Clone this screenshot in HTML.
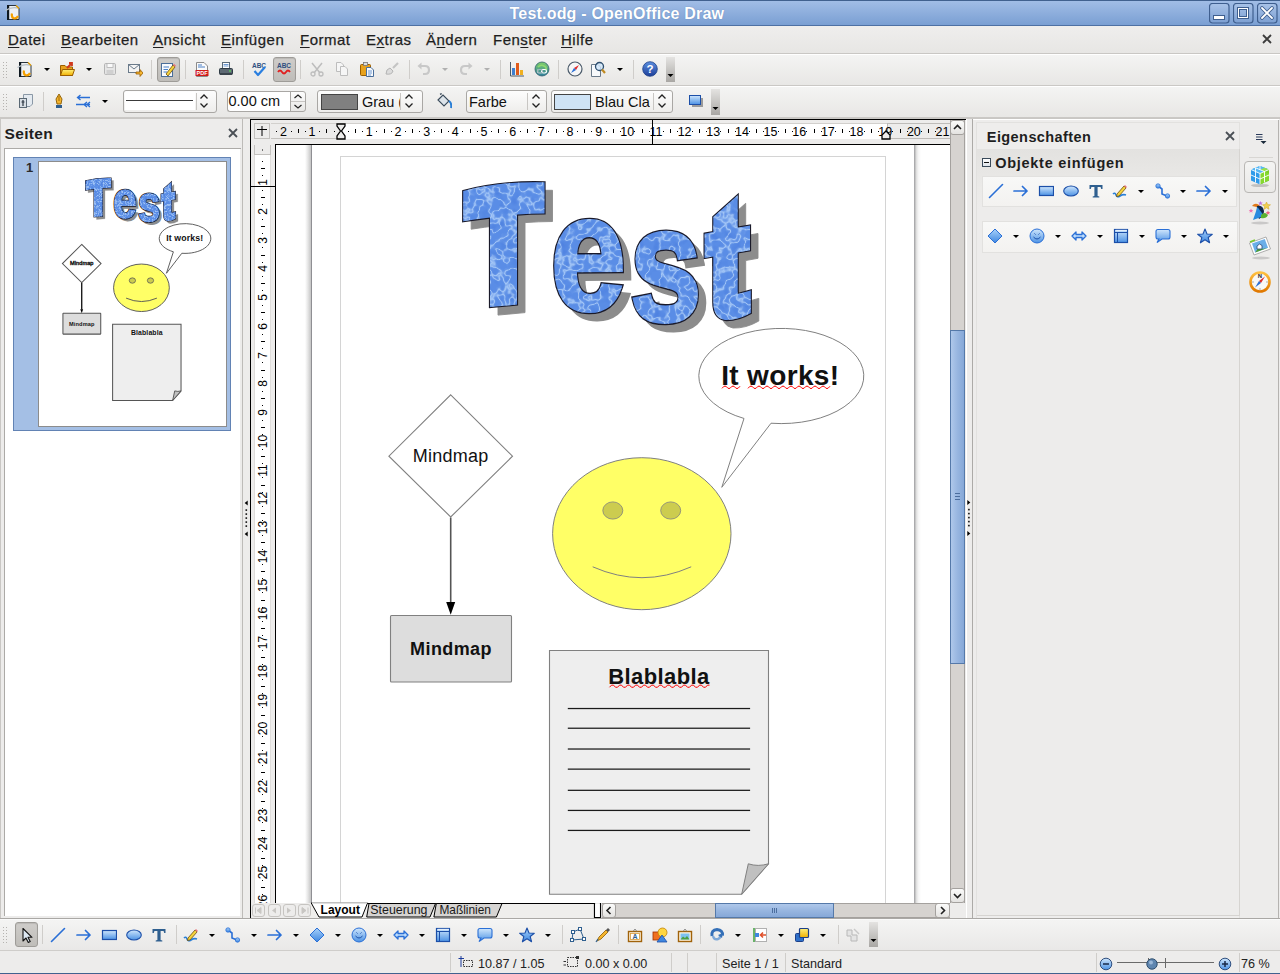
<!DOCTYPE html><html><head><meta charset="utf-8"><style>
html,body{margin:0;padding:0;}
body{width:1280px;height:974px;overflow:hidden;position:relative;background:#EDECEB;font-family:"Liberation Sans", sans-serif;}
div,svg{box-sizing:border-box;}
u{text-decoration:underline;text-underline-offset:1.5px;text-decoration-thickness:1px;}
</style></head><body>
<svg width="0" height="0" style="position:absolute"><defs><linearGradient id="gBlue" x1="0" y1="0" x2="0" y2="1"><stop offset="0" stop-color="#A9D2FA"/><stop offset="1" stop-color="#3D86E0"/></linearGradient><linearGradient id="gBlue2" x1="0" y1="0" x2="0" y2="1"><stop offset="0" stop-color="#CFE6FC"/><stop offset="1" stop-color="#4C92E4"/></linearGradient><linearGradient id="gGray" x1="0" y1="0" x2="0" y2="1"><stop offset="0" stop-color="#F2F2F2"/><stop offset="1" stop-color="#BDBDBD"/></linearGradient><linearGradient id="gOver" x1="0" y1="0" x2="0" y2="1"><stop offset="0" stop-color="#D9D8D6"/><stop offset="1" stop-color="#A6A4A1"/></linearGradient><linearGradient id="gOrange" x1="0" y1="0" x2="0" y2="1"><stop offset="0" stop-color="#FFD36A"/><stop offset="1" stop-color="#E08A00"/></linearGradient><linearGradient id="gYellow" x1="0" y1="0" x2="0" y2="1"><stop offset="0" stop-color="#FFF07A"/><stop offset="1" stop-color="#F0B000"/></linearGradient><linearGradient id="gPress" x1="0" y1="0" x2="0" y2="1"><stop offset="0" stop-color="#D4D2CF"/><stop offset="1" stop-color="#BDBBB7"/></linearGradient><linearGradient id="gGlobe" x1="0" y1="0" x2="0" y2="1"><stop offset="0" stop-color="#7FCF6A"/><stop offset="1" stop-color="#2E7F9E"/></linearGradient><linearGradient id="gHelp" x1="0" y1="0" x2="0" y2="1"><stop offset="0" stop-color="#5C8FE0"/><stop offset="1" stop-color="#1D3F99"/></linearGradient></defs></svg>
<div style="position:absolute;left:0px;top:0px;width:1280px;height:26px;background:linear-gradient(#A1BDE6,#7A9FD3);border-top:1px solid #41618F;border-bottom:1px solid #4E70A3;"></div>
<div style="position:absolute;left:509.5px;top:4.52px;font-size:16px;line-height:18.40px;height:18.40px;white-space:nowrap;color:#FFFFFF;font-weight:bold;letter-spacing:0.2px;text-shadow:0 0 1px #5C7FB0;">Test.odg - OpenOffice Draw</div>
<svg style="position:absolute;left:1209px;top:3px;" width="21" height="21" viewBox="0 0 21 21"><rect x="0.5" y="0.5" width="19.5" height="19.5" rx="3" fill="url(#wbg)" stroke="#3F5F8F" stroke-width="1.2"/><rect x="4.5" y="12.5" width="11" height="4" fill="#fff" stroke="#3F5F8F" stroke-width="1"/></svg>
<svg style="position:absolute;left:1233px;top:3px;" width="21" height="21" viewBox="0 0 21 21"><rect x="0.5" y="0.5" width="19.5" height="19.5" rx="3" fill="url(#wbg)" stroke="#3F5F8F" stroke-width="1.2"/><rect x="5.5" y="5.5" width="9" height="9" fill="none" stroke="#3F5F8F" stroke-width="3"/><rect x="5.5" y="5.5" width="9" height="9" fill="none" stroke="#fff" stroke-width="1"/></svg>
<svg style="position:absolute;left:1257px;top:3px;" width="21" height="21" viewBox="0 0 21 21"><rect x="0.5" y="0.5" width="19.5" height="19.5" rx="3" fill="url(#wbg)" stroke="#3F5F8F" stroke-width="1.2"/><path d="M5 5 L15 15 M15 5 L5 15" stroke="#3F5F8F" stroke-width="3.6" stroke-linecap="round"/><path d="M5 5 L15 15 M15 5 L5 15" stroke="#fff" stroke-width="1.8" stroke-linecap="round"/></svg>
<svg width="0" height="0" style="position:absolute"><defs><linearGradient id="wbg" x1="0" y1="0" x2="0" y2="1"><stop offset="0" stop-color="#A9C3E8"/><stop offset="1" stop-color="#7C9FD2"/></linearGradient></defs></svg>
<svg style="position:absolute;left:5px;top:4px" width="16" height="16" viewBox="0 0 16 16"><path d="M3 1.5 H11 L14 4.5 V15.5 H3 Z" fill="#EEF1F4" stroke="#2A3440" stroke-width="1"/><rect x="2" y="1" width="2.2" height="15" fill="#0E1820"/><path d="M0.5 6.5 Q6 2.5 13 4" fill="none" stroke="#B8C0C8" stroke-width="1.3"/><path d="M11 1.5 L14 4.5" stroke="#E8A000" stroke-width="1.2"/><path d="M13 12 Q11.5 15.2 8.5 14.2 Q6.2 13 7 9.5" fill="none" stroke="#F5A000" stroke-width="2.2"/></svg>
<div style="position:absolute;left:0px;top:26px;width:1280px;height:28px;background:linear-gradient(#EFEEED,#E7E6E4);border-bottom:1px solid #C9C7C4;"></div>
<div style="position:absolute;left:8px;top:31.42px;font-size:15px;line-height:17.25px;height:17.25px;white-space:nowrap;color:#1E1E1E;font-weight:normal;letter-spacing:0.5px;-webkit-text-stroke:0.25px #1E1E1E;"><u>D</u>atei</div>
<div style="position:absolute;left:61px;top:31.42px;font-size:15px;line-height:17.25px;height:17.25px;white-space:nowrap;color:#1E1E1E;font-weight:normal;letter-spacing:0.5px;-webkit-text-stroke:0.25px #1E1E1E;"><u>B</u>earbeiten</div>
<div style="position:absolute;left:153px;top:31.42px;font-size:15px;line-height:17.25px;height:17.25px;white-space:nowrap;color:#1E1E1E;font-weight:normal;letter-spacing:0.5px;-webkit-text-stroke:0.25px #1E1E1E;"><u>A</u>nsicht</div>
<div style="position:absolute;left:221px;top:31.42px;font-size:15px;line-height:17.25px;height:17.25px;white-space:nowrap;color:#1E1E1E;font-weight:normal;letter-spacing:0.5px;-webkit-text-stroke:0.25px #1E1E1E;"><u>E</u>infügen</div>
<div style="position:absolute;left:300px;top:31.42px;font-size:15px;line-height:17.25px;height:17.25px;white-space:nowrap;color:#1E1E1E;font-weight:normal;letter-spacing:0.5px;-webkit-text-stroke:0.25px #1E1E1E;"><u>F</u>ormat</div>
<div style="position:absolute;left:366px;top:31.42px;font-size:15px;line-height:17.25px;height:17.25px;white-space:nowrap;color:#1E1E1E;font-weight:normal;letter-spacing:0.5px;-webkit-text-stroke:0.25px #1E1E1E;">E<u>x</u>tras</div>
<div style="position:absolute;left:426px;top:31.42px;font-size:15px;line-height:17.25px;height:17.25px;white-space:nowrap;color:#1E1E1E;font-weight:normal;letter-spacing:0.5px;-webkit-text-stroke:0.25px #1E1E1E;">Ä<u>n</u>dern</div>
<div style="position:absolute;left:493px;top:31.42px;font-size:15px;line-height:17.25px;height:17.25px;white-space:nowrap;color:#1E1E1E;font-weight:normal;letter-spacing:0.5px;-webkit-text-stroke:0.25px #1E1E1E;">Fen<u>s</u>ter</div>
<div style="position:absolute;left:561px;top:31.42px;font-size:15px;line-height:17.25px;height:17.25px;white-space:nowrap;color:#1E1E1E;font-weight:normal;letter-spacing:0.5px;-webkit-text-stroke:0.25px #1E1E1E;"><u>H</u>ilfe</div>
<svg style="position:absolute;left:1261px;top:33px;" width="12" height="12" viewBox="0 0 12 12"><path d="M2 2 L10 10 M10 2 L2 10" stroke="#3C3C3C" stroke-width="1.8"/></svg>
<div style="position:absolute;left:0px;top:54px;width:1280px;height:32px;background:linear-gradient(#F4F4F3,#E8E7E5);border-bottom:1px solid #CAC8C5;border-top:1px solid #FFFFFF;"></div>
<div style="position:absolute;left:0px;top:86px;width:1280px;height:32px;background:linear-gradient(#F4F4F3,#E8E7E5);border-bottom:1px solid #CAC8C5;border-top:1px solid #FFFFFF;"></div>
<svg style="position:absolute;left:3px;top:62px;" width="4" height="17" viewBox="0 0 4 17"><rect x="0" y="0" width="1" height="1" fill="#B5B3B0"/><rect x="0" y="3" width="1" height="1" fill="#B5B3B0"/><rect x="0" y="6" width="1" height="1" fill="#B5B3B0"/><rect x="0" y="9" width="1" height="1" fill="#B5B3B0"/><rect x="0" y="12" width="1" height="1" fill="#B5B3B0"/><rect x="0" y="15" width="1" height="1" fill="#B5B3B0"/><rect x="3" y="0" width="1" height="1" fill="#B5B3B0"/><rect x="3" y="3" width="1" height="1" fill="#B5B3B0"/><rect x="3" y="6" width="1" height="1" fill="#B5B3B0"/><rect x="3" y="9" width="1" height="1" fill="#B5B3B0"/><rect x="3" y="12" width="1" height="1" fill="#B5B3B0"/><rect x="3" y="15" width="1" height="1" fill="#B5B3B0"/></svg>
<svg style="position:absolute;left:17px;top:61px" width="16" height="16" viewBox="0 0 16 16"><path d="M3 1.5 H11 L14 4.5 V15.5 H3 Z" fill="#EEF1F4" stroke="#2A3440" stroke-width="1"/><rect x="2" y="1" width="2.2" height="15" fill="#0E1820"/><path d="M0.5 6.5 Q6 2.5 13 4" fill="none" stroke="#B8C0C8" stroke-width="1.3"/><path d="M11 1.5 L14 4.5" stroke="#E8A000" stroke-width="1.2"/><path d="M13 12 Q11.5 15.2 8.5 14.2 Q6.2 13 7 9.5" fill="none" stroke="#F5A000" stroke-width="2.2"/></svg>
<svg style="position:absolute;left:38.5px;top:61px" width="16" height="16" viewBox="0 0 16 16"><path d="M5 7 H11 L8 10 Z" fill="#000"/></svg>
<svg style="position:absolute;left:59px;top:61px" width="16" height="16" viewBox="0 0 16 16"><path d="M1.5 4.5 H6 L7.5 6 H13.5 V14.5 H1.5 Z" fill="#E8A21C" stroke="#9B5E00" stroke-width="1"/><path d="M1.5 14.5 L3.5 8.5 H15.5 L13.5 14.5 Z" fill="url(#gYellow)" stroke="#9B5E00" stroke-width="1"/><path d="M8 7 L13 2 M10 2 H13 V5" fill="none" stroke="#D0381C" stroke-width="1.8"/></svg>
<svg style="position:absolute;left:80.5px;top:61px" width="16" height="16" viewBox="0 0 16 16"><path d="M5 7 H11 L8 10 Z" fill="#000"/></svg>
<svg style="position:absolute;left:102px;top:61px" width="16" height="16" viewBox="0 0 16 16"><rect x="2.5" y="2.5" width="11" height="11" rx="1.2" fill="#E6E6E6" stroke="#B4B4B4" stroke-width="1"/><rect x="5" y="2.5" width="6" height="4" fill="#FAFAFA" stroke="#B4B4B4" stroke-width="0.8"/><rect x="4.5" y="9" width="7" height="4.5" fill="#D0D0D0"/></svg>
<svg style="position:absolute;left:127px;top:61px" width="16" height="16" viewBox="0 0 16 16"><rect x="1.5" y="3.5" width="11" height="8" fill="#F4F4F4" stroke="#6A7A8A" stroke-width="1"/><path d="M1.5 3.5 L7 8 L12.5 3.5" fill="none" stroke="#6A7A8A" stroke-width="1"/><path d="M9 11 H13 V8.5 L16 12 L13 15.5 V13 H9 Z" fill="#F5B52E" stroke="#9B5E00" stroke-width="0.8"/></svg>
<div style="position:absolute;left:151px;top:60px;width:1px;height:19px;background:#CFCDCA;"></div>
<div style="position:absolute;left:157px;top:57px;width:23px;height:25px;background:linear-gradient(#CFCDCA,#BFBDB9);border:1px solid #9E9C98;border-radius:3px;box-shadow:inset 0 1px 1px rgba(0,0,0,0.1);"></div>
<svg style="position:absolute;left:160px;top:61px" width="16" height="16" viewBox="0 0 16 16"><rect x="1.5" y="2.5" width="11" height="13" fill="#F8FAFC" stroke="#4A6E9A" stroke-width="1"/><path d="M3.5 6 H9 M3.5 8.5 H8 M3.5 11 H7" stroke="#4A80C8" stroke-width="1"/><path d="M6 13 L13 4 L15 6 L8 15 Z" fill="#F5D33A" stroke="#6B4E12" stroke-width="0.8"/><path d="M13 4 L14 2.8 L16 4.8 L15 6 Z" fill="#E8777A"/></svg>
<div style="position:absolute;left:185px;top:60px;width:1px;height:19px;background:#CFCDCA;"></div>
<svg style="position:absolute;left:194px;top:61px" width="16" height="16" viewBox="0 0 16 16"><path d="M2.5 1.5 H10 L13.5 5 V15.5 H2.5 Z" fill="#FAFAFA" stroke="#8A8A8A" stroke-width="1"/><path d="M4 4 H8 M4 6 H11" stroke="#4A80C8" stroke-width="1"/><rect x="1.5" y="9" width="13" height="6" fill="#D01818"/><text x="8" y="14" text-anchor="middle" font-family="Liberation Sans" font-weight="bold" font-size="5.5" fill="#fff">PDF</text></svg>
<svg style="position:absolute;left:218px;top:61px" width="16" height="16" viewBox="0 0 16 16"><rect x="4.5" y="1.5" width="7" height="6" fill="#FFFFFF" stroke="#5A6A7A" stroke-width="1"/><path d="M5.5 3.5 H10.5 M5.5 5 H10.5" stroke="#4A80C8" stroke-width="0.8"/><rect x="1.5" y="7.5" width="13" height="6" rx="1" fill="#5E6A74" stroke="#2E3A44" stroke-width="1"/><rect x="2" y="12" width="12" height="2" fill="#3A444C"/><circle cx="12" cy="10" r="0.9" fill="#5CD05C"/></svg>
<div style="position:absolute;left:243px;top:60px;width:1px;height:19px;background:#CFCDCA;"></div>
<svg style="position:absolute;left:251px;top:61px" width="16" height="16" viewBox="0 0 16 16"><text x="8" y="7" text-anchor="middle" font-family="Liberation Sans" font-weight="bold" font-size="6.5" fill="#2F4F7F">ABC</text><path d="M3.5 10 L7 14 L14 6" fill="none" stroke="#2A7FE0" stroke-width="2.2" stroke-linejoin="round"/></svg>
<div style="position:absolute;left:273px;top:57px;width:23px;height:25px;background:linear-gradient(#CFCDCA,#BFBDB9);border:1px solid #9E9C98;border-radius:3px;box-shadow:inset 0 1px 1px rgba(0,0,0,0.1);"></div>
<svg style="position:absolute;left:276px;top:61px" width="16" height="16" viewBox="0 0 16 16"><text x="8" y="7" text-anchor="middle" font-family="Liberation Sans" font-weight="bold" font-size="6.5" fill="#2F4F7F">ABC</text><path d="M2 11 Q4 8 6 11 T10 11 T14 11" fill="none" stroke="#E02020" stroke-width="1.8"/></svg>
<div style="position:absolute;left:300px;top:60px;width:1px;height:19px;background:#CFCDCA;"></div>
<svg style="position:absolute;left:309px;top:61px" width="16" height="16" viewBox="0 0 16 16"><path d="M3 2 L11 12 M13 2 L5 12" stroke="#BDBDBD" stroke-width="1.5"/><circle cx="4" cy="13" r="2" fill="none" stroke="#BDBDBD" stroke-width="1.3"/><circle cx="12" cy="13" r="2" fill="none" stroke="#BDBDBD" stroke-width="1.3"/></svg>
<svg style="position:absolute;left:334px;top:61px" width="16" height="16" viewBox="0 0 16 16"><path d="M2.5 1.5 H7 L9.5 4 V10.5 H2.5 Z" fill="#F6F6F6" stroke="#BDBDBD" stroke-width="1"/><path d="M6.5 5.5 H11 L13.5 8 V14.5 H6.5 Z" fill="#F6F6F6" stroke="#BDBDBD" stroke-width="1"/></svg>
<svg style="position:absolute;left:359px;top:61px" width="16" height="16" viewBox="0 0 16 16"><rect x="1.5" y="3.5" width="10" height="11" rx="1" fill="#E8A21C" stroke="#9B5E00" stroke-width="1"/><rect x="4.5" y="1.5" width="4" height="3" fill="#DDD" stroke="#777" stroke-width="0.8"/><path d="M7.5 6.5 H12 L14.5 9 V15.5 H7.5 Z" fill="#F8FAFC" stroke="#4A6E9A" stroke-width="1"/><path d="M9 10 H13 M9 12 H13 M9 14 H12" stroke="#4A80C8" stroke-width="0.8"/></svg>
<svg style="position:absolute;left:384px;top:61px" width="16" height="16" viewBox="0 0 16 16"><path d="M9 7 L14 2" stroke="#C4C4C4" stroke-width="2.2"/><path d="M2 13 Q2 8 6 7 L9 10 Q8 14 2 13 Z" fill="#DCDCDC" stroke="#B4B4B4" stroke-width="1"/></svg>
<div style="position:absolute;left:409px;top:60px;width:1px;height:19px;background:#CFCDCA;"></div>
<svg style="position:absolute;left:416px;top:61px" width="16" height="16" viewBox="0 0 16 16"><path d="M4 5 H9 Q13 5 13 9 Q13 13 9 13 H7" fill="none" stroke="#C8C8C8" stroke-width="2.2"/><path d="M1.5 5 L5.5 1.5 V8.5 Z" fill="#C8C8C8"/></svg>
<svg style="position:absolute;left:437px;top:61px" width="16" height="16" viewBox="0 0 16 16"><path d="M5 7 H11 L8 10 Z" fill="#B0B0B0"/></svg>
<svg style="position:absolute;left:458px;top:61px" width="16" height="16" viewBox="0 0 16 16"><path d="M12 5 H7 Q3 5 3 9 Q3 13 7 13 H9" fill="none" stroke="#C8C8C8" stroke-width="2.2"/><path d="M14.5 5 L10.5 1.5 V8.5 Z" fill="#C8C8C8"/></svg>
<svg style="position:absolute;left:479px;top:61px" width="16" height="16" viewBox="0 0 16 16"><path d="M5 7 H11 L8 10 Z" fill="#B0B0B0"/></svg>
<div style="position:absolute;left:500px;top:60px;width:1px;height:19px;background:#CFCDCA;"></div>
<svg style="position:absolute;left:509px;top:61px" width="16" height="16" viewBox="0 0 16 16"><path d="M1.5 1 V15 H15" fill="none" stroke="#4A5A6A" stroke-width="1"/><rect x="3" y="7" width="3" height="7" fill="#3E7FD0"/><rect x="7" y="2" width="3" height="12" fill="#E05A1A"/><rect x="11" y="9" width="3" height="5" fill="#F0B020"/></svg>
<svg style="position:absolute;left:534px;top:61px" width="16" height="16" viewBox="0 0 16 16"><circle cx="8" cy="8" r="7" fill="url(#gGlobe)" stroke="#2F5F6F" stroke-width="0.8"/><path d="M4 6 Q7 3 10 5 Q13 6 12 9" fill="none" stroke="#8FD870" stroke-width="1.6"/><rect x="3.5" y="8.5" width="5" height="3.5" rx="1.7" fill="none" stroke="#fff" stroke-width="1.2"/><rect x="7.5" y="8.5" width="5" height="3.5" rx="1.7" fill="none" stroke="#fff" stroke-width="1.2"/><rect x="3.5" y="8.5" width="5" height="3.5" rx="1.7" fill="none" stroke="#2F5F6F" stroke-width="0.5"/></svg>
<div style="position:absolute;left:558px;top:60px;width:1px;height:19px;background:#CFCDCA;"></div>
<svg style="position:absolute;left:567px;top:61px" width="16" height="16" viewBox="0 0 16 16"><circle cx="8" cy="8" r="7" fill="#F6F6F6" stroke="#4A5A6A" stroke-width="1.2"/><path d="M12 4 L9 9 L7 7 Z" fill="#E02A2A"/><path d="M4 12 L7 7 L9 9 Z" fill="#2A6FD6"/></svg>
<svg style="position:absolute;left:590px;top:61px" width="16" height="16" viewBox="0 0 16 16"><path d="M1.5 3.5 H8 L10.5 6 V15.5 H1.5 Z" fill="#F8FAFC" stroke="#6A7A8A" stroke-width="1"/><circle cx="9.5" cy="5.5" r="4" fill="#CFE6FA" fill-opacity="0.8" stroke="#2F4F6F" stroke-width="1.3"/><path d="M12 8.5 L15 12" stroke="#C08A20" stroke-width="2.2"/></svg>
<svg style="position:absolute;left:612px;top:61px" width="16" height="16" viewBox="0 0 16 16"><path d="M5 7 H11 L8 10 Z" fill="#000"/></svg>
<div style="position:absolute;left:633px;top:60px;width:1px;height:19px;background:#CFCDCA;"></div>
<svg style="position:absolute;left:642px;top:61px" width="16" height="16" viewBox="0 0 16 16"><circle cx="8" cy="8" r="7.3" fill="url(#gHelp)" stroke="#1C3F88" stroke-width="0.8"/><text x="8" y="12.3" text-anchor="middle" font-family="Liberation Sans" font-weight="bold" font-size="11.5" fill="#fff">?</text></svg>
<div style="position:absolute;left:666px;top:57px;width:9px;height:25px;background:linear-gradient(#E4E3E1,#A9A7A4);"></div><svg style="position:absolute;left:666px;top:73px;" width="9" height="6" viewBox="0 0 9 6"><path d="M1.5 1 H7.5 L4.5 4 Z" fill="#000"/></svg>
<svg style="position:absolute;left:3px;top:94px;" width="4" height="17" viewBox="0 0 4 17"><rect x="0" y="0" width="1" height="1" fill="#B5B3B0"/><rect x="0" y="3" width="1" height="1" fill="#B5B3B0"/><rect x="0" y="6" width="1" height="1" fill="#B5B3B0"/><rect x="0" y="9" width="1" height="1" fill="#B5B3B0"/><rect x="0" y="12" width="1" height="1" fill="#B5B3B0"/><rect x="0" y="15" width="1" height="1" fill="#B5B3B0"/><rect x="3" y="0" width="1" height="1" fill="#B5B3B0"/><rect x="3" y="3" width="1" height="1" fill="#B5B3B0"/><rect x="3" y="6" width="1" height="1" fill="#B5B3B0"/><rect x="3" y="9" width="1" height="1" fill="#B5B3B0"/><rect x="3" y="12" width="1" height="1" fill="#B5B3B0"/><rect x="3" y="15" width="1" height="1" fill="#B5B3B0"/></svg>
<svg style="position:absolute;left:18px;top:93px" width="16" height="16" viewBox="0 0 16 16"><path d="M5.5 1.5 H14.5 V11 L12 13.5 H5.5 Z" fill="#E4EAF0" stroke="#8A98A6" stroke-width="1"/><rect x="1.5" y="5.5" width="7" height="9" fill="#D8DEE4" stroke="#5A6874" stroke-width="1"/><path d="M5 7 V13 M3.5 9 H6.5" stroke="#2A3440" stroke-width="1.2"/></svg>
<div style="position:absolute;left:43px;top:92px;width:1px;height:19px;background:#CFCDCA;"></div>
<svg style="position:absolute;left:51px;top:93px" width="16" height="16" viewBox="0 0 16 16"><path d="M8 1 L11 6 L10 11 H6 L5 6 Z" fill="#F5B52E" stroke="#8A5A00" stroke-width="0.9"/><path d="M8 3 V8" stroke="#8A5A00" stroke-width="0.8"/><rect x="5" y="12" width="6" height="3" fill="#2F5F8F"/></svg>
<svg style="position:absolute;left:75px;top:93px" width="16" height="16" viewBox="0 0 16 16"><path d="M15 4.5 H2.5 M5.5 2 L2.5 4.5 L5.5 7" fill="none" stroke="#2A6FD6" stroke-width="1.3"/><path d="M1 11.5 H15 M12 9 L9 11.5 L12 14 M15 9 L12 11.5 L15 14" fill="none" stroke="#2A6FD6" stroke-width="1.3"/></svg>
<svg style="position:absolute;left:96.5px;top:93px" width="16" height="16" viewBox="0 0 16 16"><path d="M5 7 H11 L8 10 Z" fill="#000"/></svg>
<div style="position:absolute;left:123px;top:90px;width:94px;height:23px;background:linear-gradient(#FDFDFD,#EEEDEB);border:1px solid #A9A7A4;border-radius:3px;"></div>
<div style="position:absolute;left:125px;top:92px;width:70px;height:18px;background:#FFFFFF;"></div>
<div style="position:absolute;left:126px;top:100px;width:67px;height:1px;background:#3A3A3A;"></div>
<div style="position:absolute;left:196px;top:93px;width:1px;height:17px;background:#C8C6C3;"></div>
<svg style="position:absolute;left:198px;top:92px;" width="12" height="18" viewBox="0 0 12 18"><path d="M2.5 6.5 L6 3 L9.5 6.5 M2.5 11.5 L6 15 L9.5 11.5" fill="none" stroke="#222" stroke-width="1.3"/></svg>
<div style="position:absolute;left:227px;top:91px;width:64px;height:21px;background:#FFFFFF;border:1px solid #A9A7A4;border-right:none;border-radius:3px 0 0 3px;"></div>
<div style="position:absolute;left:228.5px;top:93.38px;font-size:14.5px;line-height:16.67px;height:16.67px;white-space:nowrap;color:#111;font-weight:normal;">0.00 cm</div>
<div style="position:absolute;left:290px;top:91px;width:16px;height:21px;background:linear-gradient(#FDFDFD,#E8E7E5);border:1px solid #A9A7A4;border-radius:0 3px 3px 0;"></div>
<div style="position:absolute;left:291px;top:101px;width:14px;height:1px;background:#C8C6C3;"></div>
<svg style="position:absolute;left:292px;top:91px;" width="12" height="21" viewBox="0 0 12 21"><path d="M2.5 7 L6 4 L9.5 7 M2.5 14 L6 17 L9.5 14" fill="none" stroke="#222" stroke-width="1.2"/></svg>
<div style="position:absolute;left:317px;top:90px;width:106px;height:23px;background:linear-gradient(#FDFDFD,#EEEDEB);border:1px solid #A9A7A4;border-radius:3px;"></div>
<div style="position:absolute;left:321px;top:94px;width:37px;height:16px;background:#808080;border:1px solid #444;"></div>
<div style="position:absolute;left:362px;top:93.88px;font-size:14.5px;line-height:16.67px;height:16.67px;white-space:nowrap;color:#111;font-weight:normal;width:38px;overflow:hidden;">Grau (</div>
<div style="position:absolute;left:400px;top:93px;width:1px;height:17px;background:#C8C6C3;"></div>
<svg style="position:absolute;left:403px;top:92px;" width="12" height="18" viewBox="0 0 12 18"><path d="M2.5 6.5 L6 3 L9.5 6.5 M2.5 11.5 L6 15 L9.5 11.5" fill="none" stroke="#222" stroke-width="1.3"/></svg>
<svg style="position:absolute;left:436px;top:93px" width="16" height="16" viewBox="0 0 16 16"><path d="M2 7 L7 2 L13 8 L8 13 Z" fill="#DDE4EA" stroke="#3A4A5A" stroke-width="1.1"/><path d="M5 2 Q3 0 6 1" fill="none" stroke="#3A4A5A" stroke-width="1"/><path d="M13 8 Q16 10 15 15" fill="none" stroke="#2A7FD6" stroke-width="2"/></svg>
<div style="position:absolute;left:466px;top:90px;width:81px;height:23px;background:linear-gradient(#FDFDFD,#EEEDEB);border:1px solid #A9A7A4;border-radius:3px;"></div>
<div style="position:absolute;left:469px;top:93.88px;font-size:14.5px;line-height:16.67px;height:16.67px;white-space:nowrap;color:#111;font-weight:normal;">Farbe</div>
<div style="position:absolute;left:527px;top:93px;width:1px;height:17px;background:#C8C6C3;"></div>
<svg style="position:absolute;left:530px;top:92px;" width="12" height="18" viewBox="0 0 12 18"><path d="M2.5 6.5 L6 3 L9.5 6.5 M2.5 11.5 L6 15 L9.5 11.5" fill="none" stroke="#222" stroke-width="1.3"/></svg>
<div style="position:absolute;left:551px;top:90px;width:122px;height:23px;background:linear-gradient(#FDFDFD,#EEEDEB);border:1px solid #A9A7A4;border-radius:3px;"></div>
<div style="position:absolute;left:554px;top:94px;width:37px;height:16px;background:#CFE3F5;border:1px solid #444;"></div>
<div style="position:absolute;left:595px;top:93.88px;font-size:14.5px;line-height:16.67px;height:16.67px;white-space:nowrap;color:#111;font-weight:normal;width:55px;overflow:hidden;">Blau Cla</div>
<div style="position:absolute;left:653px;top:93px;width:1px;height:17px;background:#C8C6C3;"></div>
<svg style="position:absolute;left:656px;top:92px;" width="12" height="18" viewBox="0 0 12 18"><path d="M2.5 6.5 L6 3 L9.5 6.5 M2.5 11.5 L6 15 L9.5 11.5" fill="none" stroke="#222" stroke-width="1.3"/></svg>
<svg style="position:absolute;left:688px;top:93px" width="16" height="16" viewBox="0 0 16 16"><rect x="4" y="5" width="11" height="9" fill="#9A9A9A"/><rect x="1.5" y="2.5" width="11" height="9" fill="url(#gBlue2)" stroke="#1C4FA8" stroke-width="1"/></svg>
<div style="position:absolute;left:711px;top:89px;width:9px;height:26px;background:linear-gradient(#E4E3E1,#A9A7A4);"></div><svg style="position:absolute;left:711px;top:106px;" width="9" height="6" viewBox="0 0 9 6"><path d="M1.5 1 H7.5 L4.5 4 Z" fill="#000"/></svg>
<div style="position:absolute;left:0px;top:118px;width:1280px;height:801px;background:#EDECEB;border-top:1px solid #C9C7C4;"></div>
<div style="position:absolute;left:0px;top:119px;width:243px;height:800px;background:#EDECEB;border-left:1px solid #C9C7C4;border-right:1px solid #BDBBB8;"></div>
<div style="position:absolute;left:4.6px;top:125.47px;font-size:15.5px;line-height:17.82px;height:17.82px;white-space:nowrap;color:#1E1E1E;font-weight:bold;letter-spacing:0.3px;">Seiten</div>
<svg style="position:absolute;left:227px;top:127px;" width="12" height="12" viewBox="0 0 12 12"><path d="M2 2 L10 10 M10 2 L2 10" stroke="#4A4F55" stroke-width="1.8"/></svg>
<div style="position:absolute;left:4px;top:148px;width:237px;height:768px;background:#FFFFFF;border-top:1px solid #ACAAA7;border-left:1px solid #ACAAA7;"></div>
<div style="position:absolute;left:243px;top:119px;width:7px;height:800px;background:#EDECEB;"></div>
<div style="position:absolute;left:250px;top:119px;width:716px;height:800px;background:#EDECEB;border-left:1px solid #000;border-top:1px solid #000;"></div>
<div style="position:absolute;left:966px;top:119px;width:7px;height:800px;background:#EDECEB;border-left:1px solid #FFFFFF;"></div>
<div style="position:absolute;left:972px;top:119px;width:268px;height:800px;background:#EDECEB;border-left:1px solid #ACAAA7;"></div>
<div style="position:absolute;left:1240px;top:119px;width:39px;height:800px;background:#EDECEB;border-right:1px solid #B5B3B0;"></div>
<div style="position:absolute;left:254px;top:123px;width:16px;height:16px;background:#EDECEB;border:1px solid #C3C1BE;"></div>
<svg style="position:absolute;left:254px;top:123px;" width="16" height="16" viewBox="0 0 16 16"><path d="M8 3 V13 M3 6.5 H13" stroke="#000" stroke-width="1"/></svg>
<div style="position:absolute;left:271px;top:123px;width:680px;height:16px;background:#EDECEB;border-top:1px solid #D2D0CD;border-bottom:1px solid #C3C1BE;"></div>
<div style="position:absolute;left:339px;top:124px;width:548px;height:15px;background:#FFFFFF;"></div>
<div style="position:absolute;left:887px;top:123px;width:63px;height:16px;background:#EDECEB;border:1px solid #BEBCB9;border-right:none;"></div>
<svg style="position:absolute;left:0;top:0" width="1280" height="974"><rect x="276" y="131" width="1" height="1" fill="#000"/><rect x="291" y="131" width="1" height="1" fill="#000"/><rect x="298" y="129" width="1" height="4" fill="#000"/><rect x="305" y="131" width="1" height="1" fill="#000"/><rect x="319" y="131" width="1" height="1" fill="#000"/><rect x="326" y="129" width="1" height="4" fill="#000"/><rect x="334" y="131" width="1" height="1" fill="#000"/><rect x="348" y="131" width="1" height="1" fill="#000"/><rect x="355" y="129" width="1" height="4" fill="#000"/><rect x="362" y="131" width="1" height="1" fill="#000"/><rect x="376" y="131" width="1" height="1" fill="#000"/><rect x="384" y="129" width="1" height="4" fill="#000"/><rect x="391" y="131" width="1" height="1" fill="#000"/><rect x="405" y="131" width="1" height="1" fill="#000"/><rect x="412" y="129" width="1" height="4" fill="#000"/><rect x="419" y="131" width="1" height="1" fill="#000"/><rect x="434" y="131" width="1" height="1" fill="#000"/><rect x="441" y="129" width="1" height="4" fill="#000"/><rect x="448" y="131" width="1" height="1" fill="#000"/><rect x="462" y="131" width="1" height="1" fill="#000"/><rect x="470" y="129" width="1" height="4" fill="#000"/><rect x="477" y="131" width="1" height="1" fill="#000"/><rect x="491" y="131" width="1" height="1" fill="#000"/><rect x="498" y="129" width="1" height="4" fill="#000"/><rect x="505" y="131" width="1" height="1" fill="#000"/><rect x="520" y="131" width="1" height="1" fill="#000"/><rect x="527" y="129" width="1" height="4" fill="#000"/><rect x="534" y="131" width="1" height="1" fill="#000"/><rect x="548" y="131" width="1" height="1" fill="#000"/><rect x="556" y="129" width="1" height="4" fill="#000"/><rect x="563" y="131" width="1" height="1" fill="#000"/><rect x="577" y="131" width="1" height="1" fill="#000"/><rect x="584" y="129" width="1" height="4" fill="#000"/><rect x="591" y="131" width="1" height="1" fill="#000"/><rect x="606" y="131" width="1" height="1" fill="#000"/><rect x="613" y="129" width="1" height="4" fill="#000"/><rect x="620" y="131" width="1" height="1" fill="#000"/><rect x="634" y="131" width="1" height="1" fill="#000"/><rect x="642" y="129" width="1" height="4" fill="#000"/><rect x="649" y="131" width="1" height="1" fill="#000"/><rect x="663" y="131" width="1" height="1" fill="#000"/><rect x="670" y="129" width="1" height="4" fill="#000"/><rect x="677" y="131" width="1" height="1" fill="#000"/><rect x="692" y="131" width="1" height="1" fill="#000"/><rect x="699" y="129" width="1" height="4" fill="#000"/><rect x="706" y="131" width="1" height="1" fill="#000"/><rect x="720" y="131" width="1" height="1" fill="#000"/><rect x="728" y="129" width="1" height="4" fill="#000"/><rect x="735" y="131" width="1" height="1" fill="#000"/><rect x="749" y="131" width="1" height="1" fill="#000"/><rect x="756" y="129" width="1" height="4" fill="#000"/><rect x="763" y="131" width="1" height="1" fill="#000"/><rect x="778" y="131" width="1" height="1" fill="#000"/><rect x="785" y="129" width="1" height="4" fill="#000"/><rect x="792" y="131" width="1" height="1" fill="#000"/><rect x="806" y="131" width="1" height="1" fill="#000"/><rect x="814" y="129" width="1" height="4" fill="#000"/><rect x="821" y="131" width="1" height="1" fill="#000"/><rect x="835" y="131" width="1" height="1" fill="#000"/><rect x="842" y="129" width="1" height="4" fill="#000"/><rect x="849" y="131" width="1" height="1" fill="#000"/><rect x="864" y="131" width="1" height="1" fill="#000"/><rect x="871" y="129" width="1" height="4" fill="#000"/><rect x="878" y="131" width="1" height="1" fill="#000"/><rect x="892" y="131" width="1" height="1" fill="#000"/><rect x="900" y="129" width="1" height="4" fill="#000"/><rect x="907" y="131" width="1" height="1" fill="#000"/><rect x="921" y="131" width="1" height="1" fill="#000"/><rect x="928" y="129" width="1" height="4" fill="#000"/><rect x="935" y="131" width="1" height="1" fill="#000"/><rect x="950" y="131" width="1" height="1" fill="#000"/></svg>
<div style="position:absolute;left:271px;top:123px;width:679px;height:16px;overflow:hidden;"><div style="position:absolute;left:-7.65px;top:1.5px;width:40px;text-align:center;font-size:12.5px;line-height:15px;color:#000;">2</div><div style="position:absolute;left:21.01px;top:1.5px;width:40px;text-align:center;font-size:12.5px;line-height:15px;color:#000;">1</div><div style="position:absolute;left:78.33px;top:1.5px;width:40px;text-align:center;font-size:12.5px;line-height:15px;color:#000;">1</div><div style="position:absolute;left:106.99px;top:1.5px;width:40px;text-align:center;font-size:12.5px;line-height:15px;color:#000;">2</div><div style="position:absolute;left:135.65px;top:1.5px;width:40px;text-align:center;font-size:12.5px;line-height:15px;color:#000;">3</div><div style="position:absolute;left:164.31px;top:1.5px;width:40px;text-align:center;font-size:12.5px;line-height:15px;color:#000;">4</div><div style="position:absolute;left:192.97px;top:1.5px;width:40px;text-align:center;font-size:12.5px;line-height:15px;color:#000;">5</div><div style="position:absolute;left:221.63px;top:1.5px;width:40px;text-align:center;font-size:12.5px;line-height:15px;color:#000;">6</div><div style="position:absolute;left:250.29px;top:1.5px;width:40px;text-align:center;font-size:12.5px;line-height:15px;color:#000;">7</div><div style="position:absolute;left:278.95px;top:1.5px;width:40px;text-align:center;font-size:12.5px;line-height:15px;color:#000;">8</div><div style="position:absolute;left:307.61px;top:1.5px;width:40px;text-align:center;font-size:12.5px;line-height:15px;color:#000;">9</div><div style="position:absolute;left:336.27px;top:1.5px;width:40px;text-align:center;font-size:12.5px;line-height:15px;color:#000;">10</div><div style="position:absolute;left:364.93px;top:1.5px;width:40px;text-align:center;font-size:12.5px;line-height:15px;color:#000;">11</div><div style="position:absolute;left:393.59px;top:1.5px;width:40px;text-align:center;font-size:12.5px;line-height:15px;color:#000;">12</div><div style="position:absolute;left:422.25px;top:1.5px;width:40px;text-align:center;font-size:12.5px;line-height:15px;color:#000;">13</div><div style="position:absolute;left:450.91px;top:1.5px;width:40px;text-align:center;font-size:12.5px;line-height:15px;color:#000;">14</div><div style="position:absolute;left:479.57px;top:1.5px;width:40px;text-align:center;font-size:12.5px;line-height:15px;color:#000;">15</div><div style="position:absolute;left:508.23px;top:1.5px;width:40px;text-align:center;font-size:12.5px;line-height:15px;color:#000;">16</div><div style="position:absolute;left:536.89px;top:1.5px;width:40px;text-align:center;font-size:12.5px;line-height:15px;color:#000;">17</div><div style="position:absolute;left:565.55px;top:1.5px;width:40px;text-align:center;font-size:12.5px;line-height:15px;color:#000;">18</div><div style="position:absolute;left:594.21px;top:1.5px;width:40px;text-align:center;font-size:12.5px;line-height:15px;color:#000;">19</div><div style="position:absolute;left:622.87px;top:1.5px;width:40px;text-align:center;font-size:12.5px;line-height:15px;color:#000;">20</div><div style="position:absolute;left:651.53px;top:1.5px;width:40px;text-align:center;font-size:12.5px;line-height:15px;color:#000;">21</div></div>
<svg style="position:absolute;left:336px;top:123px;" width="10" height="17" viewBox="0 0 10 17"><path d="M1 1 H9 V3 L5.5 8 L9 13 V16 H1 V13 L4.5 8 L1 3 Z" fill="#EDECEB" stroke="#000" stroke-width="1.3"/></svg>
<svg style="position:absolute;left:881px;top:130px;" width="10" height="10" viewBox="0 0 10 10"><path d="M5 1 L9 5 V9 H1 V5 Z" fill="#EDECEB" stroke="#000" stroke-width="1.3"/></svg>
<div style="position:absolute;left:652px;top:120px;width:1px;height:25px;background:#000;"></div>
<div style="position:absolute;left:254px;top:145px;width:17px;height:758px;background:#FFFFFF;border-left:1px solid #DEDCDA;border-right:1px solid #DEDCDA;"></div>
<div style="position:absolute;left:254px;top:145px;width:17px;height:10px;background:#EDECEB;border:1px solid #C3C1BE;border-top:none;"></div>
<svg style="position:absolute;left:0;top:0" width="1280" height="974"><rect x="262" y="161" width="1" height="1" fill="#000"/><rect x="261" y="168" width="4" height="1" fill="#000"/><rect x="262" y="175" width="1" height="1" fill="#000"/><rect x="262" y="190" width="1" height="1" fill="#000"/><rect x="261" y="197" width="4" height="1" fill="#000"/><rect x="262" y="204" width="1" height="1" fill="#000"/><rect x="262" y="219" width="1" height="1" fill="#000"/><rect x="261" y="226" width="4" height="1" fill="#000"/><rect x="262" y="233" width="1" height="1" fill="#000"/><rect x="262" y="247" width="1" height="1" fill="#000"/><rect x="261" y="255" width="4" height="1" fill="#000"/><rect x="262" y="262" width="1" height="1" fill="#000"/><rect x="262" y="276" width="1" height="1" fill="#000"/><rect x="261" y="283" width="4" height="1" fill="#000"/><rect x="262" y="290" width="1" height="1" fill="#000"/><rect x="262" y="305" width="1" height="1" fill="#000"/><rect x="261" y="312" width="4" height="1" fill="#000"/><rect x="262" y="319" width="1" height="1" fill="#000"/><rect x="262" y="334" width="1" height="1" fill="#000"/><rect x="261" y="341" width="4" height="1" fill="#000"/><rect x="262" y="348" width="1" height="1" fill="#000"/><rect x="262" y="362" width="1" height="1" fill="#000"/><rect x="261" y="370" width="4" height="1" fill="#000"/><rect x="262" y="377" width="1" height="1" fill="#000"/><rect x="262" y="391" width="1" height="1" fill="#000"/><rect x="261" y="398" width="4" height="1" fill="#000"/><rect x="262" y="405" width="1" height="1" fill="#000"/><rect x="262" y="420" width="1" height="1" fill="#000"/><rect x="261" y="427" width="4" height="1" fill="#000"/><rect x="262" y="434" width="1" height="1" fill="#000"/><rect x="262" y="449" width="1" height="1" fill="#000"/><rect x="261" y="456" width="4" height="1" fill="#000"/><rect x="262" y="463" width="1" height="1" fill="#000"/><rect x="262" y="477" width="1" height="1" fill="#000"/><rect x="261" y="485" width="4" height="1" fill="#000"/><rect x="262" y="492" width="1" height="1" fill="#000"/><rect x="262" y="506" width="1" height="1" fill="#000"/><rect x="261" y="513" width="4" height="1" fill="#000"/><rect x="262" y="520" width="1" height="1" fill="#000"/><rect x="262" y="535" width="1" height="1" fill="#000"/><rect x="261" y="542" width="4" height="1" fill="#000"/><rect x="262" y="549" width="1" height="1" fill="#000"/><rect x="262" y="564" width="1" height="1" fill="#000"/><rect x="261" y="571" width="4" height="1" fill="#000"/><rect x="262" y="578" width="1" height="1" fill="#000"/><rect x="262" y="592" width="1" height="1" fill="#000"/><rect x="261" y="600" width="4" height="1" fill="#000"/><rect x="262" y="607" width="1" height="1" fill="#000"/><rect x="262" y="621" width="1" height="1" fill="#000"/><rect x="261" y="628" width="4" height="1" fill="#000"/><rect x="262" y="635" width="1" height="1" fill="#000"/><rect x="262" y="650" width="1" height="1" fill="#000"/><rect x="261" y="657" width="4" height="1" fill="#000"/><rect x="262" y="664" width="1" height="1" fill="#000"/><rect x="262" y="679" width="1" height="1" fill="#000"/><rect x="261" y="686" width="4" height="1" fill="#000"/><rect x="262" y="693" width="1" height="1" fill="#000"/><rect x="262" y="707" width="1" height="1" fill="#000"/><rect x="261" y="715" width="4" height="1" fill="#000"/><rect x="262" y="722" width="1" height="1" fill="#000"/><rect x="262" y="736" width="1" height="1" fill="#000"/><rect x="261" y="743" width="4" height="1" fill="#000"/><rect x="262" y="750" width="1" height="1" fill="#000"/><rect x="262" y="765" width="1" height="1" fill="#000"/><rect x="261" y="772" width="4" height="1" fill="#000"/><rect x="262" y="779" width="1" height="1" fill="#000"/><rect x="262" y="794" width="1" height="1" fill="#000"/><rect x="261" y="801" width="4" height="1" fill="#000"/><rect x="262" y="808" width="1" height="1" fill="#000"/><rect x="262" y="822" width="1" height="1" fill="#000"/><rect x="261" y="830" width="4" height="1" fill="#000"/><rect x="262" y="837" width="1" height="1" fill="#000"/><rect x="262" y="851" width="1" height="1" fill="#000"/><rect x="261" y="858" width="4" height="1" fill="#000"/><rect x="262" y="865" width="1" height="1" fill="#000"/><rect x="262" y="880" width="1" height="1" fill="#000"/><rect x="261" y="887" width="4" height="1" fill="#000"/><rect x="262" y="894" width="1" height="1" fill="#000"/><rect x="262" y="149.5" width="1" height="1" fill="#000"/></svg>
<div style="position:absolute;left:254px;top:145px;width:17px;height:758px;overflow:hidden;"><div style="position:absolute;left:-11.5px;top:30.15px;width:40px;height:15px;text-align:center;font-size:12px;line-height:15px;color:#000;transform:rotate(-90deg);">1</div><div style="position:absolute;left:-11.5px;top:58.90px;width:40px;height:15px;text-align:center;font-size:12px;line-height:15px;color:#000;transform:rotate(-90deg);">2</div><div style="position:absolute;left:-11.5px;top:87.65px;width:40px;height:15px;text-align:center;font-size:12px;line-height:15px;color:#000;transform:rotate(-90deg);">3</div><div style="position:absolute;left:-11.5px;top:116.40px;width:40px;height:15px;text-align:center;font-size:12px;line-height:15px;color:#000;transform:rotate(-90deg);">4</div><div style="position:absolute;left:-11.5px;top:145.15px;width:40px;height:15px;text-align:center;font-size:12px;line-height:15px;color:#000;transform:rotate(-90deg);">5</div><div style="position:absolute;left:-11.5px;top:173.90px;width:40px;height:15px;text-align:center;font-size:12px;line-height:15px;color:#000;transform:rotate(-90deg);">6</div><div style="position:absolute;left:-11.5px;top:202.65px;width:40px;height:15px;text-align:center;font-size:12px;line-height:15px;color:#000;transform:rotate(-90deg);">7</div><div style="position:absolute;left:-11.5px;top:231.40px;width:40px;height:15px;text-align:center;font-size:12px;line-height:15px;color:#000;transform:rotate(-90deg);">8</div><div style="position:absolute;left:-11.5px;top:260.15px;width:40px;height:15px;text-align:center;font-size:12px;line-height:15px;color:#000;transform:rotate(-90deg);">9</div><div style="position:absolute;left:-11.5px;top:288.90px;width:40px;height:15px;text-align:center;font-size:12px;line-height:15px;color:#000;transform:rotate(-90deg);">10</div><div style="position:absolute;left:-11.5px;top:317.65px;width:40px;height:15px;text-align:center;font-size:12px;line-height:15px;color:#000;transform:rotate(-90deg);">11</div><div style="position:absolute;left:-11.5px;top:346.40px;width:40px;height:15px;text-align:center;font-size:12px;line-height:15px;color:#000;transform:rotate(-90deg);">12</div><div style="position:absolute;left:-11.5px;top:375.15px;width:40px;height:15px;text-align:center;font-size:12px;line-height:15px;color:#000;transform:rotate(-90deg);">13</div><div style="position:absolute;left:-11.5px;top:403.90px;width:40px;height:15px;text-align:center;font-size:12px;line-height:15px;color:#000;transform:rotate(-90deg);">14</div><div style="position:absolute;left:-11.5px;top:432.65px;width:40px;height:15px;text-align:center;font-size:12px;line-height:15px;color:#000;transform:rotate(-90deg);">15</div><div style="position:absolute;left:-11.5px;top:461.40px;width:40px;height:15px;text-align:center;font-size:12px;line-height:15px;color:#000;transform:rotate(-90deg);">16</div><div style="position:absolute;left:-11.5px;top:490.15px;width:40px;height:15px;text-align:center;font-size:12px;line-height:15px;color:#000;transform:rotate(-90deg);">17</div><div style="position:absolute;left:-11.5px;top:518.90px;width:40px;height:15px;text-align:center;font-size:12px;line-height:15px;color:#000;transform:rotate(-90deg);">18</div><div style="position:absolute;left:-11.5px;top:547.65px;width:40px;height:15px;text-align:center;font-size:12px;line-height:15px;color:#000;transform:rotate(-90deg);">19</div><div style="position:absolute;left:-11.5px;top:576.40px;width:40px;height:15px;text-align:center;font-size:12px;line-height:15px;color:#000;transform:rotate(-90deg);">20</div><div style="position:absolute;left:-11.5px;top:605.15px;width:40px;height:15px;text-align:center;font-size:12px;line-height:15px;color:#000;transform:rotate(-90deg);">21</div><div style="position:absolute;left:-11.5px;top:633.90px;width:40px;height:15px;text-align:center;font-size:12px;line-height:15px;color:#000;transform:rotate(-90deg);">22</div><div style="position:absolute;left:-11.5px;top:662.65px;width:40px;height:15px;text-align:center;font-size:12px;line-height:15px;color:#000;transform:rotate(-90deg);">23</div><div style="position:absolute;left:-11.5px;top:691.40px;width:40px;height:15px;text-align:center;font-size:12px;line-height:15px;color:#000;transform:rotate(-90deg);">24</div><div style="position:absolute;left:-11.5px;top:720.15px;width:40px;height:15px;text-align:center;font-size:12px;line-height:15px;color:#000;transform:rotate(-90deg);">25</div><div style="position:absolute;left:-11.5px;top:748.90px;width:40px;height:15px;text-align:center;font-size:12px;line-height:15px;color:#000;transform:rotate(-90deg);">26</div></div>
<div style="position:absolute;left:250px;top:186px;width:25px;height:1px;background:#000;"></div>
<div style="position:absolute;left:275px;top:144px;width:675px;height:759px;background:#FFFFFF;border-left:1px solid #000;border-top:1px solid #000;"></div>
<div style="position:absolute;left:305px;top:145px;width:7px;height:758px;background:linear-gradient(90deg,#FFFFFF,#E6E6E6 40%,#C8C8C8 80%,#8F8F93 86%,#8F8F93);"></div>
<div style="position:absolute;left:914px;top:145px;width:7px;height:758px;background:linear-gradient(90deg,#9C9CA0,#BDBDBD 16%,#E0E0E0 35%,#F4F4F4 60%,#FFFFFF);"></div>
<div style="position:absolute;left:340px;top:156px;width:546px;height:747px;border-left:1px solid #D4D4D4;border-top:1px solid #D4D4D4;border-right:1px solid #D4D4D4;"></div>
<svg style="position:absolute;left:276px;top:145px" width="674" height="758" viewBox="276 145 674 758"><defs><filter id="water" x="0" y="0" width="100%" height="100%" color-interpolation-filters="sRGB"><feTurbulence type="fractalNoise" baseFrequency="0.10" numOctaves="2" seed="11" result="n"/><feColorMatrix in="n" type="matrix" values="0 0 0 0 0.80  0 0 0 0 0.90  0 0 0 0 1  1 0 0 0 0" result="a"/><feComponentTransfer in="a" result="veins"><feFuncA type="table" tableValues="0 0 0 0 0 0 0.1 0.65 0.1 0 0 0 0 0 0"/></feComponentTransfer><feColorMatrix in="n" type="matrix" values="0 0 0 0 0.25  0 0 0 0 0.45  0 0 0 0 0.85  0 1.2 0 0 -0.6" result="dark"/><feComposite in="dark" in2="SourceAlpha" operator="in" result="d2"/><feComposite in="veins" in2="SourceAlpha" operator="in" result="v2"/><feMerge><feMergeNode in="SourceGraphic"/><feMergeNode in="d2"/><feMergeNode in="v2"/></feMerge></filter></defs><g><text transform="matrix(1.355,-0.01,0,1.645,558.5,317.8)" x="0" y="0" font-family="Liberation Sans" font-weight="bold" font-size="100" fill="#8C8C8C" stroke="#8C8C8C" stroke-width="3.0" stroke-linejoin="miter" >e</text><text transform="matrix(1.293,-0.01,0,1.63,637.7,328.7)" x="0" y="0" font-family="Liberation Sans" font-weight="bold" font-size="100" fill="#8C8C8C" stroke="#8C8C8C" stroke-width="3.0" stroke-linejoin="miter" >s</text><path transform="translate(8,8)" d="M463.2 191 Q500 181 544.5 182.3 L544.5 213.5 Q530 213.6 517 214.6 L517 304.6 L490 307.1 L490 217.6 Q476 219.2 463.2 221.2 Z" fill="#8C8C8C" stroke="#8C8C8C" stroke-width="0.91" stroke-linejoin="miter"/><path transform="translate(8,8)" d="M704.6 233.7 L713.3 232.1 L713.3 217 L737.7 195.3 L737.7 227.7 L750 225.5 L750 250.3 L737.7 252.5 L737.7 294 L750.8 290.4 L750.8 313 Q738 320.5 725 320 Q713.3 318 713.3 302 L713.3 256.4 L704.6 258 Z" fill="#8C8C8C" stroke="#8C8C8C" stroke-width="0.91" stroke-linejoin="miter"/></g><g><text transform="matrix(1.355,-0.01,0,1.645,550.5,309.8)" x="0" y="0" font-family="Liberation Sans" font-weight="bold" font-size="100" fill="#1A1A2A" stroke="#1A1A2A" stroke-width="4.0" stroke-linejoin="miter" >e</text><text transform="matrix(1.293,-0.01,0,1.63,629.7,320.7)" x="0" y="0" font-family="Liberation Sans" font-weight="bold" font-size="100" fill="#1A1A2A" stroke="#1A1A2A" stroke-width="4.0" stroke-linejoin="miter" >s</text><path transform="translate(0,0)" d="M463.2 191 Q500 181 544.5 182.3 L544.5 213.5 Q530 213.6 517 214.6 L517 304.6 L490 307.1 L490 217.6 Q476 219.2 463.2 221.2 Z" fill="#1A1A2A" stroke="#1A1A2A" stroke-width="2.21" stroke-linejoin="miter"/><path transform="translate(0,0)" d="M704.6 233.7 L713.3 232.1 L713.3 217 L737.7 195.3 L737.7 227.7 L750 225.5 L750 250.3 L737.7 252.5 L737.7 294 L750.8 290.4 L750.8 313 Q738 320.5 725 320 Q713.3 318 713.3 302 L713.3 256.4 L704.6 258 Z" fill="#1A1A2A" stroke="#1A1A2A" stroke-width="2.21" stroke-linejoin="miter"/></g><g filter="url(#water)"><text transform="matrix(1.355,-0.01,0,1.645,550.5,309.8)" x="0" y="0" font-family="Liberation Sans" font-weight="bold" font-size="100" fill="#5A8DE6" stroke="#5A8DE6" stroke-width="2.3" stroke-linejoin="miter" >e</text><text transform="matrix(1.293,-0.01,0,1.63,629.7,320.7)" x="0" y="0" font-family="Liberation Sans" font-weight="bold" font-size="100" fill="#5A8DE6" stroke="#5A8DE6" stroke-width="2.3" stroke-linejoin="miter" >s</text><path transform="translate(0,0)" d="M463.2 191 Q500 181 544.5 182.3 L544.5 213.5 Q530 213.6 517 214.6 L517 304.6 L490 307.1 L490 217.6 Q476 219.2 463.2 221.2 Z" fill="#5A8DE6" stroke="none" stroke-width="0.00" stroke-linejoin="miter"/><path transform="translate(0,0)" d="M704.6 233.7 L713.3 232.1 L713.3 217 L737.7 195.3 L737.7 227.7 L750 225.5 L750 250.3 L737.7 252.5 L737.7 294 L750.8 290.4 L750.8 313 Q738 320.5 725 320 Q713.3 318 713.3 302 L713.3 256.4 L704.6 258 Z" fill="#5A8DE6" stroke="none" stroke-width="0.00" stroke-linejoin="miter"/></g><path d="M771 423.23 A82.5 47.6 0 1 0 744 418.46 L721.8 487.3 Z" fill="#FFFFFF" stroke="#808080" stroke-width="1"/><ellipse cx="641.8" cy="533.7" rx="89.2" ry="76" fill="#FFFF66" stroke="#808080" stroke-width="1"/><ellipse cx="612.8" cy="510.5" rx="10" ry="8.6" fill="#CCCC4F" stroke="#808080" stroke-width="0.8"/><ellipse cx="670.7" cy="510.5" rx="10" ry="8.6" fill="#CCCC4F" stroke="#808080" stroke-width="0.8"/><path d="M592.7 566.8 Q642 588.6 691.2 566.8" fill="none" stroke="#808080" stroke-width="1"/><path d="M450.7 394.8 L512.5 456.2 L450.7 517 L388.9 456.2 Z" fill="#FFFFFF" stroke="#808080" stroke-width="1.1"/><text x="450.7" y="461.9" text-anchor="middle" font-family="Liberation Sans" font-size="18" letter-spacing="0.25" fill="#111" >Mindmap</text><path d="M450.7 517.5 V603" stroke="#555" stroke-width="1.6"/><path d="M446.2 602 L455.2 602 L450.7 614.8 Z" fill="#000"/><rect x="390.5" y="615.5" width="121" height="66.5" rx="1" fill="#DDDDDD" stroke="#808080" stroke-width="1.1"/><text x="451" y="655.1" text-anchor="middle" font-family="Liberation Sans" font-weight="bold" font-size="18" letter-spacing="0.4" fill="#111">Mindmap</text><text x="780.3" y="384.7" text-anchor="middle" font-family="Liberation Sans" font-weight="bold" font-size="28" letter-spacing="0.35" fill="#111">It works!</text><path d="M722.0 388.35 L724.0 386.25 L726.0 386.25 L728.0 388.35 L730.0 388.35 L732.0 386.25 L734.0 386.25 L736.0 388.35 L738.0 388.35 L740.0 386.25" fill="none" stroke="#FF0000" stroke-width="1"/><path d="M748.0 388.35 L750.0 386.25 L752.0 386.25 L754.0 388.35 L756.0 388.35 L758.0 386.25 L760.0 386.25 L762.0 388.35 L764.0 388.35 L766.0 386.25 L768.0 386.25 L770.0 388.35 L772.0 388.35 L774.0 386.25 L776.0 386.25 L778.0 388.35 L780.0 388.35 L782.0 386.25 L784.0 386.25 L786.0 388.35 L788.0 388.35 L790.0 386.25 L792.0 386.25 L794.0 388.35 L796.0 388.35 L798.0 386.25 L800.0 386.25 L802.0 388.35 L804.0 388.35 L806.0 386.25 L808.0 386.25 L810.0 388.35 L812.0 388.35 L814.0 386.25 L816.0 386.25 L818.0 388.35 L820.0 388.35 L822.0 386.25 L824.0 386.25 L826.0 388.35 L828.0 388.35 L830.0 386.25" fill="none" stroke="#FF0000" stroke-width="1"/><path d="M549.5 650.5 H768.5 V863.8 L741.7 894.2 H549.5 Z" fill="#EEEEEE" stroke="#808080" stroke-width="1.1"/><path d="M748.3 863.8 Q758 867 768.5 863.8 L741.7 894.2 Z" fill="#C0C0C0" stroke="#808080" stroke-width="1"/><text x="659" y="683.5" text-anchor="middle" font-family="Liberation Sans" font-weight="bold" font-size="22" letter-spacing="0.4" fill="#111">Blablabla</text><path d="M609.5 687.25 L611.5 685.15 L613.5 685.15 L615.5 687.25 L617.5 687.25 L619.5 685.15 L621.5 685.15 L623.5 687.25 L625.5 687.25 L627.5 685.15 L629.5 685.15 L631.5 687.25 L633.5 687.25 L635.5 685.15 L637.5 685.15 L639.5 687.25 L641.5 687.25 L643.5 685.15 L645.5 685.15 L647.5 687.25 L649.5 687.25 L651.5 685.15 L653.5 685.15 L655.5 687.25 L657.5 687.25 L659.5 685.15 L661.5 685.15 L663.5 687.25 L665.5 687.25 L667.5 685.15 L669.5 685.15 L671.5 687.25 L673.5 687.25 L675.5 685.15 L677.5 685.15 L679.5 687.25 L681.5 687.25 L683.5 685.15 L685.5 685.15 L687.5 687.25 L689.5 687.25 L691.5 685.15 L693.5 685.15 L695.5 687.25 L697.5 687.25 L699.5 685.15 L701.5 685.15 L703.5 687.25 L705.5 687.25 L707.5 685.15 L709.5 685.15" fill="none" stroke="#FF0000" stroke-width="1"/><rect x="567.8" y="707.9" width="182.3" height="1.25" fill="#1A1A1A"/><rect x="567.8" y="727.6" width="182.3" height="1.25" fill="#1A1A1A"/><rect x="567.8" y="748.4" width="182.3" height="1.25" fill="#1A1A1A"/><rect x="567.8" y="768.5" width="182.3" height="1.25" fill="#1A1A1A"/><rect x="567.8" y="789.7" width="182.3" height="1.25" fill="#1A1A1A"/><rect x="567.8" y="809.8" width="182.3" height="1.25" fill="#1A1A1A"/><rect x="567.8" y="829.8" width="182.3" height="1.25" fill="#1A1A1A"/></svg>
<div style="position:absolute;left:950px;top:120px;width:15px;height:783px;background:#D6D3D0;border-left:1px solid #A4A19E;border-right:1px solid #A4A19E;"></div>
<div style="position:absolute;left:950px;top:120px;width:15px;height:15px;background:linear-gradient(#FBFBFA,#E4E3E1);border:1px solid #A4A19E;border-radius:3px;"></div>
<svg style="position:absolute;left:950px;top:120px;" width="15" height="15" viewBox="0 0 15 15"><path d="M4 9 L7.5 5.5 L11 9" fill="none" stroke="#222" stroke-width="1.6"/></svg>
<div style="position:absolute;left:950px;top:888px;width:15px;height:15px;background:linear-gradient(#FBFBFA,#E4E3E1);border:1px solid #A4A19E;border-radius:3px;"></div>
<svg style="position:absolute;left:950px;top:888px;" width="15" height="15" viewBox="0 0 15 15"><path d="M4 6 L7.5 9.5 L11 6" fill="none" stroke="#222" stroke-width="1.6"/></svg>
<div style="position:absolute;left:950px;top:330px;width:15px;height:334px;background:linear-gradient(90deg,#AFC8EA,#98B6E0 50%,#86A8D8);border:1px solid #5579A9;"></div>
<div style="position:absolute;left:251px;top:903px;width:700px;height:15px;background:#EDECEB;"></div>
<div style="position:absolute;left:252px;top:904px;width:13px;height:13px;background:#EDECEB;border:1px solid #C6C4C1;border-radius:3px;"></div>
<div style="position:absolute;left:268px;top:904px;width:13px;height:13px;background:#EDECEB;border:1px solid #C6C4C1;border-radius:3px;"></div>
<div style="position:absolute;left:283px;top:904px;width:13px;height:13px;background:#EDECEB;border:1px solid #C6C4C1;border-radius:3px;"></div>
<div style="position:absolute;left:298px;top:904px;width:13px;height:13px;background:#EDECEB;border:1px solid #C6C4C1;border-radius:3px;"></div>
<svg style="position:absolute;left:252px;top:904px;" width="60" height="13" viewBox="0 0 60 13"><path d="M3.5 3.5 V9.5 M9 3.5 L5 6.5 L9 9.5 Z" stroke="#C8C6C3" fill="#C8C6C3"/><path d="M24 3.5 L20 6.5 L24 9.5 Z" fill="#C8C6C3"/><path d="M35 3.5 L39 6.5 L35 9.5 Z" fill="#C8C6C3"/><path d="M50 3.5 L54 6.5 L50 9.5 Z M56 3.5 V9.5" stroke="#C8C6C3" fill="#C8C6C3"/></svg>
<div style="position:absolute;left:311px;top:903px;width:284px;height:15px;background:#EFEEEC;"></div>
<svg style="position:absolute;left:305px;top:902px;" width="300" height="17" viewBox="0 0 300 17"><path d="M6 1.5 H290" stroke="#000" stroke-width="1"/><path d="M64 1.5 L61.7 15 H125 L130.5 1.5 Z" fill="#D6D4D2" stroke="#000" stroke-width="1"/><path d="M131.3 1.5 L128.9 15 H191.4 L197 1.5 Z" fill="#D6D4D2" stroke="#000" stroke-width="1"/><path d="M6.25 1 L14 15 H57 L62.5 1 Z" fill="#FFFFFF" stroke="#000" stroke-width="1"/><path d="M7 1.2 H62" stroke="#FFFFFF" stroke-width="1.2"/><path d="M289.5 1 V15.5 H295.5 V1" fill="none" stroke="#000" stroke-width="1.2"/><rect x="290.2" y="2" width="4.6" height="13" fill="#FFFFFF"/></svg>
<div style="position:absolute;left:320.6px;top:903.64px;font-size:12px;line-height:13.80px;height:13.80px;white-space:nowrap;color:#000;font-weight:bold;">Layout</div>
<div style="position:absolute;left:370.3px;top:903.28px;font-size:12.4px;line-height:14.26px;height:14.26px;white-space:nowrap;color:#1A1A1A;font-weight:normal;">Steuerung</div>
<div style="position:absolute;left:439.4px;top:903.73px;font-size:11.9px;line-height:13.68px;height:13.68px;white-space:nowrap;color:#1A1A1A;font-weight:normal;">Maßlinien</div>
<div style="position:absolute;left:602px;top:903px;width:348px;height:15px;background:#D6D3D0;border-top:1px solid #A4A19E;border-bottom:1px solid #A4A19E;"></div>
<div style="position:absolute;left:602px;top:903px;width:14px;height:15px;background:linear-gradient(#FBFBFA,#E4E3E1);border:1px solid #A4A19E;border-radius:3px;"></div>
<svg style="position:absolute;left:602px;top:903px;" width="14" height="15" viewBox="0 0 14 15"><path d="M8.5 4 L5 7.5 L8.5 11" fill="none" stroke="#222" stroke-width="1.6"/></svg>
<div style="position:absolute;left:935px;top:903px;width:15px;height:15px;background:linear-gradient(#FBFBFA,#E4E3E1);border:1px solid #A4A19E;border-radius:3px;"></div>
<svg style="position:absolute;left:935px;top:903px;" width="15" height="15" viewBox="0 0 15 15"><path d="M6 4 L9.5 7.5 L6 11" fill="none" stroke="#222" stroke-width="1.6"/></svg>
<div style="position:absolute;left:715px;top:903px;width:119px;height:15px;background:linear-gradient(#AFC8EA,#98B6E0 50%,#86A8D8);border:1px solid #5579A9;"></div>
<svg style="position:absolute;left:715px;top:903px;" width="119" height="15" viewBox="0 0 119 15"><path d="M57.5 5 V10 M59.5 5 V10 M61.5 5 V10" stroke="#4C6E9E" stroke-width="1"/></svg>
<div style="position:absolute;left:240px;top:149px;width:2px;height:769px;background:#EDECEB;"></div>
<div style="position:absolute;left:13px;top:157px;width:218px;height:274px;background:#A4BFE5;border:1px solid #6283B4;"></div>
<div style="position:absolute;left:26px;top:161.24px;font-size:13px;line-height:14.95px;height:14.95px;white-space:nowrap;color:#2A2A2A;font-weight:bold;">1</div>
<div style="position:absolute;left:38px;top:161px;width:189px;height:266px;background:#8C8C8C;"></div>
<div style="position:absolute;left:39px;top:162px;width:187px;height:264px;background:#FFFFFF;"></div>
<svg style="position:absolute;left:38px;top:161px" width="189" height="265" viewBox="0 0 189 265"><g transform="translate(0.4,0.4) scale(0.31246) translate(-312,-129.2)"><g><text transform="matrix(1.355,-0.01,0,1.645,558.5,317.8)" x="0" y="0" font-family="Liberation Sans" font-weight="bold" font-size="100" fill="#8C8C8C" stroke="#8C8C8C" stroke-width="3.0" stroke-linejoin="miter" >e</text><text transform="matrix(1.293,-0.01,0,1.63,637.7,328.7)" x="0" y="0" font-family="Liberation Sans" font-weight="bold" font-size="100" fill="#8C8C8C" stroke="#8C8C8C" stroke-width="3.0" stroke-linejoin="miter" >s</text><path transform="translate(8,8)" d="M463.2 191 Q500 181 544.5 182.3 L544.5 213.5 Q530 213.6 517 214.6 L517 304.6 L490 307.1 L490 217.6 Q476 219.2 463.2 221.2 Z" fill="#8C8C8C" stroke="#8C8C8C" stroke-width="0.91" stroke-linejoin="miter"/><path transform="translate(8,8)" d="M704.6 233.7 L713.3 232.1 L713.3 217 L737.7 195.3 L737.7 227.7 L750 225.5 L750 250.3 L737.7 252.5 L737.7 294 L750.8 290.4 L750.8 313 Q738 320.5 725 320 Q713.3 318 713.3 302 L713.3 256.4 L704.6 258 Z" fill="#8C8C8C" stroke="#8C8C8C" stroke-width="0.91" stroke-linejoin="miter"/></g><g><text transform="matrix(1.355,-0.01,0,1.645,550.5,309.8)" x="0" y="0" font-family="Liberation Sans" font-weight="bold" font-size="100" fill="#1A1A2A" stroke="#1A1A2A" stroke-width="5.0" stroke-linejoin="miter" >e</text><text transform="matrix(1.293,-0.01,0,1.63,629.7,320.7)" x="0" y="0" font-family="Liberation Sans" font-weight="bold" font-size="100" fill="#1A1A2A" stroke="#1A1A2A" stroke-width="5.0" stroke-linejoin="miter" >s</text><path transform="translate(0,0)" d="M463.2 191 Q500 181 544.5 182.3 L544.5 213.5 Q530 213.6 517 214.6 L517 304.6 L490 307.1 L490 217.6 Q476 219.2 463.2 221.2 Z" fill="#1A1A2A" stroke="#1A1A2A" stroke-width="3.51" stroke-linejoin="miter"/><path transform="translate(0,0)" d="M704.6 233.7 L713.3 232.1 L713.3 217 L737.7 195.3 L737.7 227.7 L750 225.5 L750 250.3 L737.7 252.5 L737.7 294 L750.8 290.4 L750.8 313 Q738 320.5 725 320 Q713.3 318 713.3 302 L713.3 256.4 L704.6 258 Z" fill="#1A1A2A" stroke="#1A1A2A" stroke-width="3.51" stroke-linejoin="miter"/></g><g filter="url(#water)"><text transform="matrix(1.355,-0.01,0,1.645,550.5,309.8)" x="0" y="0" font-family="Liberation Sans" font-weight="bold" font-size="100" fill="#5A8DE6" stroke="#5A8DE6" stroke-width="2.3" stroke-linejoin="miter" >e</text><text transform="matrix(1.293,-0.01,0,1.63,629.7,320.7)" x="0" y="0" font-family="Liberation Sans" font-weight="bold" font-size="100" fill="#5A8DE6" stroke="#5A8DE6" stroke-width="2.3" stroke-linejoin="miter" >s</text><path transform="translate(0,0)" d="M463.2 191 Q500 181 544.5 182.3 L544.5 213.5 Q530 213.6 517 214.6 L517 304.6 L490 307.1 L490 217.6 Q476 219.2 463.2 221.2 Z" fill="#5A8DE6" stroke="none" stroke-width="0.00" stroke-linejoin="miter"/><path transform="translate(0,0)" d="M704.6 233.7 L713.3 232.1 L713.3 217 L737.7 195.3 L737.7 227.7 L750 225.5 L750 250.3 L737.7 252.5 L737.7 294 L750.8 290.4 L750.8 313 Q738 320.5 725 320 Q713.3 318 713.3 302 L713.3 256.4 L704.6 258 Z" fill="#5A8DE6" stroke="none" stroke-width="0.00" stroke-linejoin="miter"/></g><path d="M771 423.23 A82.5 47.6 0 1 0 744 418.46 L721.8 487.3 Z" fill="#FFFFFF" stroke="#555555" stroke-width="3"/><ellipse cx="641.8" cy="533.7" rx="89.2" ry="76" fill="#FFFF66" stroke="#555555" stroke-width="3"/><ellipse cx="612.8" cy="510.5" rx="10" ry="8.6" fill="#CCCC4F" stroke="#555555" stroke-width="2.4000000000000004"/><ellipse cx="670.7" cy="510.5" rx="10" ry="8.6" fill="#CCCC4F" stroke="#555555" stroke-width="2.4000000000000004"/><path d="M592.7 566.8 Q642 588.6 691.2 566.8" fill="none" stroke="#555555" stroke-width="3"/><path d="M450.7 394.8 L512.5 456.2 L450.7 517 L388.9 456.2 Z" fill="#FFFFFF" stroke="#555555" stroke-width="3.3000000000000003"/><text x="450.7" y="461.9" text-anchor="middle" font-family="Liberation Sans" font-size="18" letter-spacing="0.25" fill="#111" stroke="#111" stroke-width="1.2">Mindmap</text><path d="M450.7 517.5 V603" stroke="#000" stroke-width="4"/><path d="M446.2 602 L455.2 602 L450.7 614.8 Z" fill="#000"/><rect x="390.5" y="615.5" width="121" height="66.5" rx="1" fill="#DDDDDD" stroke="#555555" stroke-width="3.3000000000000003"/><text x="451" y="655.1" text-anchor="middle" font-family="Liberation Sans" font-weight="bold" font-size="18" letter-spacing="0.4" fill="#111">Mindmap</text><text x="780.3" y="384.7" text-anchor="middle" font-family="Liberation Sans" font-weight="bold" font-size="28" letter-spacing="0.35" fill="#111">It works!</text><path d="M549.5 650.5 H768.5 V863.8 L741.7 894.2 H549.5 Z" fill="#EEEEEE" stroke="#555555" stroke-width="3.3000000000000003"/><path d="M748.3 863.8 Q758 867 768.5 863.8 L741.7 894.2 Z" fill="#C0C0C0" stroke="#555555" stroke-width="3"/><text x="659" y="683.5" text-anchor="middle" font-family="Liberation Sans" font-weight="bold" font-size="22" letter-spacing="0.4" fill="#111">Blablabla</text></g></svg>
<div style="position:absolute;left:973px;top:119px;width:306px;height:1px;background:#FFFFFF;"></div>
<div style="position:absolute;left:976px;top:122px;width:264px;height:796px;background:#EEEDEC;border-left:1px solid #E2E1DF;border-top:1px solid #E2E1DF;border-right:1px solid #E2E1DF;"></div>
<div style="position:absolute;left:986.8px;top:128.88px;font-size:14.5px;line-height:16.67px;height:16.67px;white-space:nowrap;color:#1E1E1E;font-weight:bold;letter-spacing:0.42px;">Eigenschaften</div>
<svg style="position:absolute;left:1224px;top:130px;" width="12" height="12" viewBox="0 0 12 12"><path d="M2 2 L10 10 M10 2 L2 10" stroke="#4A4F55" stroke-width="1.8"/></svg>
<div style="position:absolute;left:977px;top:149px;width:263px;height:767px;background:linear-gradient(#E3E2E0,#EBEAE8 40px,#EDECEB 60px);border-right:1px solid #D6D4D1;border-bottom:1px solid #D6D4D1;"></div>
<div style="position:absolute;left:982px;top:158px;width:9px;height:9px;background:linear-gradient(#FFFFFF,#DDE3EA);border:1px solid #3A4A5A;"></div>
<div style="position:absolute;left:984px;top:162px;width:5px;height:1px;background:#111;"></div>
<div style="position:absolute;left:995.2px;top:154.88px;font-size:14.5px;line-height:16.67px;height:16.67px;white-space:nowrap;color:#1E1E1E;font-weight:bold;letter-spacing:0.72px;">Objekte einfügen</div>
<div style="position:absolute;left:982px;top:176px;width:255px;height:31px;background:linear-gradient(#F8F8F7,#F3F2F0);border:1px solid #E2E1DF;"></div>
<div style="position:absolute;left:982px;top:221px;width:256px;height:32px;background:linear-gradient(#F8F8F7,#F3F2F0);border:1px solid #E2E1DF;"></div>
<svg style="position:absolute;left:988px;top:183px" width="16" height="16" viewBox="0 0 16 16"><path d="M1.5 14.5 L14.5 1.5" stroke="#2A6FD6" stroke-width="1.6" stroke-linecap="round"/></svg>
<svg style="position:absolute;left:1013px;top:183px" width="16" height="16" viewBox="0 0 16 16"><path d="M1 8 H14 M9.5 3.5 L14 8 L9.5 12.5" fill="none" stroke="#2A6FD6" stroke-width="1.7" stroke-linecap="round" stroke-linejoin="round"/></svg>
<svg style="position:absolute;left:1038px;top:183px" width="16" height="16" viewBox="0 0 16 16"><rect x="1.5" y="3.5" width="14" height="9" fill="url(#gBlue2)" stroke="#1C4FA8" stroke-width="1.2"/></svg>
<svg style="position:absolute;left:1063px;top:183px" width="16" height="16" viewBox="0 0 16 16"><ellipse cx="8" cy="8" rx="7.3" ry="5" fill="url(#gBlue2)" stroke="#1C4FA8" stroke-width="1.1"/></svg>
<svg style="position:absolute;left:1088px;top:183px" width="16" height="16" viewBox="0 0 16 16"><path d="M1.5 2 H14.5 V6 H13.2 L12.6 4 H9.6 V13 L11.3 13.6 V14.5 H4.7 V13.6 L6.4 13 V4 H3.4 L2.8 6 H1.5 Z" fill="#2F5F8F"/></svg>
<svg style="position:absolute;left:1112px;top:183px" width="16" height="16" viewBox="0 0 16 16"><path d="M1 11 Q3 9 4 12 T8 13 T14 12" fill="none" stroke="#2A7FD6" stroke-width="1.6"/><path d="M5 11 L12 3 L14 5 L7 13 L4.5 13.5 Z" fill="#F5D33A" stroke="#6B4E12" stroke-width="0.8"/><path d="M12 3 L13 2 L15 4 L14 5 Z" fill="#E8777A"/></svg>
<svg style="position:absolute;left:1133px;top:183px" width="16" height="16" viewBox="0 0 16 16"><path d="M5 7 H11 L8 10 Z" fill="#000"/></svg>
<svg style="position:absolute;left:1155px;top:183px" width="16" height="16" viewBox="0 0 16 16"><path d="M3 3 L7 6 V11 L12 13" fill="none" stroke="#2A6FD6" stroke-width="1.6"/><circle cx="3" cy="3" r="2.2" fill="url(#gBlue)" stroke="#2A6FD6" stroke-width="0.8"/><circle cx="12.5" cy="13" r="2.2" fill="url(#gBlue)" stroke="#2A6FD6" stroke-width="0.8"/></svg>
<svg style="position:absolute;left:1175px;top:183px" width="16" height="16" viewBox="0 0 16 16"><path d="M5 7 H11 L8 10 Z" fill="#000"/></svg>
<svg style="position:absolute;left:1196px;top:183px" width="16" height="16" viewBox="0 0 16 16"><path d="M1 8 H14 M9.5 3.5 L14 8 L9.5 12.5" fill="none" stroke="#2A6FD6" stroke-width="1.7" stroke-linecap="round" stroke-linejoin="round"/></svg>
<svg style="position:absolute;left:1217px;top:183px" width="16" height="16" viewBox="0 0 16 16"><path d="M5 7 H11 L8 10 Z" fill="#000"/></svg>
<svg style="position:absolute;left:987px;top:228px" width="16" height="16" viewBox="0 0 16 16"><path d="M8 1 L15 8 L8 15 L1 8 Z" fill="url(#gBlue)" stroke="#2A6FD6" stroke-width="1"/></svg>
<svg style="position:absolute;left:1008px;top:228px" width="16" height="16" viewBox="0 0 16 16"><path d="M5 7 H11 L8 10 Z" fill="#000"/></svg>
<svg style="position:absolute;left:1029px;top:228px" width="16" height="16" viewBox="0 0 16 16"><circle cx="8" cy="8" r="7" fill="url(#gBlue2)" stroke="#2A6FD6" stroke-width="1"/><path d="M4.5 9 Q8 13 11.5 9" fill="none" stroke="#1C4FA8" stroke-width="1"/><path d="M5.5 5.5 L6.5 6.5 M10.5 5.5 L9.5 6.5" stroke="#1C4FA8" stroke-width="1"/></svg>
<svg style="position:absolute;left:1050px;top:228px" width="16" height="16" viewBox="0 0 16 16"><path d="M5 7 H11 L8 10 Z" fill="#000"/></svg>
<svg style="position:absolute;left:1071px;top:228px" width="16" height="16" viewBox="0 0 16 16"><path d="M1 8 L5 4 V6.5 H11 V4 L15 8 L11 12 V9.5 H5 V12 Z" fill="#BFDDFB" stroke="#2A6FD6" stroke-width="1.3" stroke-linejoin="round"/></svg>
<svg style="position:absolute;left:1092px;top:228px" width="16" height="16" viewBox="0 0 16 16"><path d="M5 7 H11 L8 10 Z" fill="#000"/></svg>
<svg style="position:absolute;left:1113px;top:228px" width="16" height="16" viewBox="0 0 16 16"><rect x="1.5" y="1.5" width="13" height="13" fill="url(#gBlue2)" stroke="#1C4FA8" stroke-width="1.2"/><path d="M1.5 4.5 H14.5 M4.5 4.5 V14.5" stroke="#1C4FA8" stroke-width="1"/><path d="M2.5 2.3 H14" stroke="#fff" stroke-width="0.8"/></svg>
<svg style="position:absolute;left:1134px;top:228px" width="16" height="16" viewBox="0 0 16 16"><path d="M5 7 H11 L8 10 Z" fill="#000"/></svg>
<svg style="position:absolute;left:1155px;top:228px" width="16" height="16" viewBox="0 0 16 16"><path d="M3 1.5 H13 Q15 1.5 15 3.5 V9 Q15 11 13 11 H7 L2 14.5 L4 11 H3 Q1 11 1 9 V3.5 Q1 1.5 3 1.5 Z" fill="url(#gBlue2)" stroke="#2A6FD6" stroke-width="1.1"/></svg>
<svg style="position:absolute;left:1176px;top:228px" width="16" height="16" viewBox="0 0 16 16"><path d="M5 7 H11 L8 10 Z" fill="#000"/></svg>
<svg style="position:absolute;left:1197px;top:228px" width="16" height="16" viewBox="0 0 16 16"><path d="M8 1 L10 6 L15.3 6.2 L11.2 9.5 L12.6 14.8 L8 11.8 L3.4 14.8 L4.8 9.5 L0.7 6.2 L6 6 Z" fill="url(#gBlue)" stroke="#1C4FA8" stroke-width="1.1" stroke-linejoin="round"/></svg>
<svg style="position:absolute;left:1218px;top:228px" width="16" height="16" viewBox="0 0 16 16"><path d="M5 7 H11 L8 10 Z" fill="#000"/></svg>
<svg style="position:absolute;left:1254px;top:131px;" width="16" height="16" viewBox="0 0 16 16"><path d="M2 3.5 H8.5 M2 6 H8.5 M2 8.5 H8.5" stroke="#2A3A5A" stroke-width="1.1"/><path d="M6.5 10 H12.5 L9.5 13 Z" fill="#1A2A3A"/></svg>
<div style="position:absolute;left:1249px;top:157px;width:24px;height:1px;background:#D8D6D3;"></div>
<div style="position:absolute;left:1244px;top:161px;width:32px;height:32px;background:linear-gradient(#F4F4F3,#EAE9E7);border:1px solid #B9B7B4;border-radius:4px;"></div>
<svg style="position:absolute;left:1248px;top:164px;" width="24" height="24" viewBox="0 0 24 24"><ellipse cx="12" cy="21.5" rx="9" ry="1.6" fill="#000" opacity="0.18"/><path d="M12 2 L21 5.5 V16.5 L12 20.5 L3 16.5 V5.5 Z" fill="#2F9BEA"/><path d="M12 9.5 L21 5.5 V16.5 L12 20.5 Z" fill="#7ACC26"/><path d="M12 2 L21 5.5 L12 9.5 L3 5.5 Z" fill="#56B8F5"/><path d="M16.5 3.7 L21 5.5 L16.5 7.5 L12 5.7 Z" fill="#9BE04A"/><path d="M12 9.5 L16.5 7.5 L21 9.5 V16.5 L12 20.5 Z" fill="#86D82E"/><path d="M7.5 3.8 L16.5 7.6 M3 5.5 L12 9.5 L21 5.5 M7.5 7.5 V18.5 M16.5 7.5 V18.5 M3 11 L12 15 L21 11 M12 9.5 V20.5 M7.5 3.8 V7.5 M12 2 V5.7" stroke="#FFFFFF" stroke-width="0.9" fill="none"/></svg>
<svg style="position:absolute;left:1248px;top:199px;" width="24" height="26" viewBox="0 0 24 26"><ellipse cx="12" cy="24" rx="9" ry="1.5" fill="#000" opacity="0.15"/><path d="M4 7 Q7 3 11 6 L13 9 Z" fill="#E07818"/><path d="M9 7 Q15 6 16 12 Q16 17 11 20 Q8 15 9 7 Z" fill="#10284A"/><path d="M5 21 L9.5 8 L16 17 Z" fill="#2A8AE0"/><path d="M13 16 Q17 12 20 16 Q18 20 13 19 Z" fill="#5AB030"/><path d="M18.5 3 L19.7 5.6 L22.5 5.8 L20.3 7.6 L21 10.3 L18.5 8.8 L16 10.3 L16.7 7.6 L14.5 5.8 L17.3 5.6 Z" fill="#F0D050" stroke="#D0A020" stroke-width="0.5"/><path d="M12.5 2 L13.2 3.5 L14.8 3.6 L13.6 4.6 L14 6.2 L12.5 5.3 L11 6.2 L11.4 4.6 L10.2 3.6 L11.8 3.5 Z" fill="#C070E0"/><path d="M3 9.5 L3.7 11 L5.3 11.1 L4.1 12.1 L4.5 13.7 L3 12.8 L1.5 13.7 L1.9 12.1 L0.7 11.1 L2.3 11 Z" fill="#F070B0"/><path d="M20 11.5 L20.7 13 L22.3 13.1 L21.1 14.1 L21.5 15.7 L20 14.8 L18.5 15.7 L18.9 14.1 L17.7 13.1 L19.3 13 Z" fill="#F06080"/></svg>
<svg style="position:absolute;left:1248px;top:234px;" width="24" height="26" viewBox="0 0 24 26"><ellipse cx="13" cy="24" rx="9" ry="1.5" fill="#000" opacity="0.15"/><path d="M1.5 9 L18 3 L22.5 15 L6 21 Z" fill="#FFFFFF" stroke="#9A9A9A" stroke-width="0.8"/><path d="M4 9.6 L16.8 5 L20 13.8 L7.2 18.4 Z" fill="#6AAEE8"/><path d="M7.2 18.4 L11 13 L14.5 15 L20 13.8 Z" fill="#4E9E30"/><path d="M9 12 L11.5 10 L14 11.5 V15 H9 Z" fill="#FFFFFF" stroke="#2A4A7A" stroke-width="0.8"/><path d="M2 8 L7 6" stroke="#7ACC26" stroke-width="1.6"/></svg>
<svg style="position:absolute;left:1248px;top:270px;" width="24" height="24" viewBox="0 0 24 24"><defs><linearGradient id="gRing" x1="0" y1="0" x2="0" y2="1"><stop offset="0" stop-color="#FFC040"/><stop offset="1" stop-color="#E07800"/></linearGradient></defs><circle cx="12" cy="12" r="9.5" fill="#F8F8F8" stroke="url(#gRing)" stroke-width="2.6"/><path d="M17 6.5 L13 13 L11 11 Z" fill="#E02A2A"/><path d="M7 17.5 L11 11 L13 13 Z" fill="#2A6FD6"/><path d="M12 4 V6 M12 18 V20 M4 12 H6 M18 12 H20" stroke="#999" stroke-width="0.8"/><text x="12" y="8.2" text-anchor="middle" font-family="Liberation Sans" font-weight="bold" font-size="6" fill="#333">N</text></svg>
<svg style="position:absolute;left:0;top:0" width="1280" height="974"><path d="M247.7 500.5 L244.7 503 L247.7 505.5 Z" fill="#000"/><path d="M247.7 531.5 L244.7 534 L247.7 536.5 Z" fill="#000"/><rect x="245.5" y="509.3" width="1.6" height="1.6" fill="#111"/><rect x="245.5" y="513.3" width="1.6" height="1.6" fill="#111"/><rect x="245.5" y="517.3" width="1.6" height="1.6" fill="#111"/><rect x="245.5" y="521.3" width="1.6" height="1.6" fill="#111"/><rect x="245.5" y="525.3" width="1.6" height="1.6" fill="#111"/><path d="M967.3 500.0 L970.3 502.5 L967.3 505.0 Z" fill="#000"/><path d="M967.3 531.0 L970.3 533.5 L967.3 536.0 Z" fill="#000"/><rect x="968.0999999999999" y="508.8" width="1.6" height="1.6" fill="#111"/><rect x="968.0999999999999" y="512.8" width="1.6" height="1.6" fill="#111"/><rect x="968.0999999999999" y="516.8" width="1.6" height="1.6" fill="#111"/><rect x="968.0999999999999" y="520.8" width="1.6" height="1.6" fill="#111"/><rect x="968.0999999999999" y="524.8" width="1.6" height="1.6" fill="#111"/></svg>
<div style="position:absolute;left:955px;top:493px;width:5px;height:1px;background:#4C6E9E;"></div>
<div style="position:absolute;left:955px;top:496px;width:5px;height:1px;background:#4C6E9E;"></div>
<div style="position:absolute;left:955px;top:499px;width:5px;height:1px;background:#4C6E9E;"></div>
<div style="position:absolute;left:0px;top:918px;width:1280px;height:1px;background:#AAA8A5;"></div>
<div style="position:absolute;left:0px;top:919px;width:1280px;height:32px;background:linear-gradient(#F4F4F3,#E9E8E7);border-top:1px solid #FAFAFA;border-bottom:1px solid #CFCDCA;"></div>
<div style="position:absolute;left:0px;top:951px;width:1280px;height:23px;background:#EDECEB;border-bottom:1px solid #41618F;"></div>
<svg style="position:absolute;left:3px;top:927px;" width="4" height="17" viewBox="0 0 4 17"><rect x="0" y="0" width="1" height="1" fill="#B5B3B0"/><rect x="0" y="3" width="1" height="1" fill="#B5B3B0"/><rect x="0" y="6" width="1" height="1" fill="#B5B3B0"/><rect x="0" y="9" width="1" height="1" fill="#B5B3B0"/><rect x="0" y="12" width="1" height="1" fill="#B5B3B0"/><rect x="0" y="15" width="1" height="1" fill="#B5B3B0"/><rect x="3" y="0" width="1" height="1" fill="#B5B3B0"/><rect x="3" y="3" width="1" height="1" fill="#B5B3B0"/><rect x="3" y="6" width="1" height="1" fill="#B5B3B0"/><rect x="3" y="9" width="1" height="1" fill="#B5B3B0"/><rect x="3" y="12" width="1" height="1" fill="#B5B3B0"/><rect x="3" y="15" width="1" height="1" fill="#B5B3B0"/></svg>
<div style="position:absolute;left:15px;top:922px;width:23px;height:25px;background:linear-gradient(#CFCDCA,#BFBDB9);border:1px solid #9E9C98;border-radius:3px;box-shadow:inset 0 1px 1px rgba(0,0,0,0.1);"></div>
<svg style="position:absolute;left:18px;top:927px" width="16" height="16" viewBox="0 0 16 16"><path d="M5 1.5 V14 L8 11 L10.3 15.5 L12.2 14.6 L10 10.3 H14 Z" fill="#DDE8F2" stroke="#111" stroke-width="1.1" stroke-linejoin="round"/></svg>
<svg style="position:absolute;left:50px;top:927px" width="16" height="16" viewBox="0 0 16 16"><path d="M1.5 14.5 L14.5 1.5" stroke="#2A6FD6" stroke-width="1.6" stroke-linecap="round"/></svg>
<svg style="position:absolute;left:76px;top:927px" width="16" height="16" viewBox="0 0 16 16"><path d="M1 8 H14 M9.5 3.5 L14 8 L9.5 12.5" fill="none" stroke="#2A6FD6" stroke-width="1.7" stroke-linecap="round" stroke-linejoin="round"/></svg>
<svg style="position:absolute;left:101px;top:927px" width="16" height="16" viewBox="0 0 16 16"><rect x="1.5" y="3.5" width="14" height="9" fill="url(#gBlue2)" stroke="#1C4FA8" stroke-width="1.2"/></svg>
<svg style="position:absolute;left:126px;top:927px" width="16" height="16" viewBox="0 0 16 16"><ellipse cx="8" cy="8" rx="7.3" ry="5" fill="url(#gBlue2)" stroke="#1C4FA8" stroke-width="1.1"/></svg>
<svg style="position:absolute;left:151px;top:927px" width="16" height="16" viewBox="0 0 16 16"><path d="M1.5 2 H14.5 V6 H13.2 L12.6 4 H9.6 V13 L11.3 13.6 V14.5 H4.7 V13.6 L6.4 13 V4 H3.4 L2.8 6 H1.5 Z" fill="#2F5F8F"/></svg>
<div style="position:absolute;left:42px;top:925px;width:1px;height:19px;background:#CFCDCA;"></div>
<div style="position:absolute;left:176px;top:925px;width:1px;height:19px;background:#CFCDCA;"></div>
<svg style="position:absolute;left:183px;top:927px" width="16" height="16" viewBox="0 0 16 16"><path d="M1 11 Q3 9 4 12 T8 13 T14 12" fill="none" stroke="#2A7FD6" stroke-width="1.6"/><path d="M5 11 L12 3 L14 5 L7 13 L4.5 13.5 Z" fill="#F5D33A" stroke="#6B4E12" stroke-width="0.8"/><path d="M12 3 L13 2 L15 4 L14 5 Z" fill="#E8777A"/></svg>
<svg style="position:absolute;left:204px;top:927px" width="16" height="16" viewBox="0 0 16 16"><path d="M5 7 H11 L8 10 Z" fill="#000"/></svg>
<svg style="position:absolute;left:225px;top:927px" width="16" height="16" viewBox="0 0 16 16"><path d="M3 3 L7 6 V11 L12 13" fill="none" stroke="#2A6FD6" stroke-width="1.6"/><circle cx="3" cy="3" r="2.2" fill="url(#gBlue)" stroke="#2A6FD6" stroke-width="0.8"/><circle cx="12.5" cy="13" r="2.2" fill="url(#gBlue)" stroke="#2A6FD6" stroke-width="0.8"/></svg>
<svg style="position:absolute;left:246px;top:927px" width="16" height="16" viewBox="0 0 16 16"><path d="M5 7 H11 L8 10 Z" fill="#000"/></svg>
<svg style="position:absolute;left:267px;top:927px" width="16" height="16" viewBox="0 0 16 16"><path d="M1 8 H14 M9.5 3.5 L14 8 L9.5 12.5" fill="none" stroke="#2A6FD6" stroke-width="1.7" stroke-linecap="round" stroke-linejoin="round"/></svg>
<svg style="position:absolute;left:288px;top:927px" width="16" height="16" viewBox="0 0 16 16"><path d="M5 7 H11 L8 10 Z" fill="#000"/></svg>
<svg style="position:absolute;left:309px;top:927px" width="16" height="16" viewBox="0 0 16 16"><path d="M8 1 L15 8 L8 15 L1 8 Z" fill="url(#gBlue)" stroke="#2A6FD6" stroke-width="1"/></svg>
<svg style="position:absolute;left:330px;top:927px" width="16" height="16" viewBox="0 0 16 16"><path d="M5 7 H11 L8 10 Z" fill="#000"/></svg>
<svg style="position:absolute;left:351px;top:927px" width="16" height="16" viewBox="0 0 16 16"><circle cx="8" cy="8" r="7" fill="url(#gBlue2)" stroke="#2A6FD6" stroke-width="1"/><path d="M4.5 9 Q8 13 11.5 9" fill="none" stroke="#1C4FA8" stroke-width="1"/><path d="M5.5 5.5 L6.5 6.5 M10.5 5.5 L9.5 6.5" stroke="#1C4FA8" stroke-width="1"/></svg>
<svg style="position:absolute;left:372px;top:927px" width="16" height="16" viewBox="0 0 16 16"><path d="M5 7 H11 L8 10 Z" fill="#000"/></svg>
<svg style="position:absolute;left:393px;top:927px" width="16" height="16" viewBox="0 0 16 16"><path d="M1 8 L5 4 V6.5 H11 V4 L15 8 L11 12 V9.5 H5 V12 Z" fill="#BFDDFB" stroke="#2A6FD6" stroke-width="1.3" stroke-linejoin="round"/></svg>
<svg style="position:absolute;left:414px;top:927px" width="16" height="16" viewBox="0 0 16 16"><path d="M5 7 H11 L8 10 Z" fill="#000"/></svg>
<svg style="position:absolute;left:435px;top:927px" width="16" height="16" viewBox="0 0 16 16"><rect x="1.5" y="1.5" width="13" height="13" fill="url(#gBlue2)" stroke="#1C4FA8" stroke-width="1.2"/><path d="M1.5 4.5 H14.5 M4.5 4.5 V14.5" stroke="#1C4FA8" stroke-width="1"/><path d="M2.5 2.3 H14" stroke="#fff" stroke-width="0.8"/></svg>
<svg style="position:absolute;left:456px;top:927px" width="16" height="16" viewBox="0 0 16 16"><path d="M5 7 H11 L8 10 Z" fill="#000"/></svg>
<svg style="position:absolute;left:477px;top:927px" width="16" height="16" viewBox="0 0 16 16"><path d="M3 1.5 H13 Q15 1.5 15 3.5 V9 Q15 11 13 11 H7 L2 14.5 L4 11 H3 Q1 11 1 9 V3.5 Q1 1.5 3 1.5 Z" fill="url(#gBlue2)" stroke="#2A6FD6" stroke-width="1.1"/></svg>
<svg style="position:absolute;left:498px;top:927px" width="16" height="16" viewBox="0 0 16 16"><path d="M5 7 H11 L8 10 Z" fill="#000"/></svg>
<svg style="position:absolute;left:519px;top:927px" width="16" height="16" viewBox="0 0 16 16"><path d="M8 1 L10 6 L15.3 6.2 L11.2 9.5 L12.6 14.8 L8 11.8 L3.4 14.8 L4.8 9.5 L0.7 6.2 L6 6 Z" fill="url(#gBlue)" stroke="#1C4FA8" stroke-width="1.1" stroke-linejoin="round"/></svg>
<svg style="position:absolute;left:540px;top:927px" width="16" height="16" viewBox="0 0 16 16"><path d="M5 7 H11 L8 10 Z" fill="#000"/></svg>
<div style="position:absolute;left:562px;top:925px;width:1px;height:19px;background:#CFCDCA;"></div>
<svg style="position:absolute;left:570px;top:927px" width="16" height="16" viewBox="0 0 16 16"><path d="M2 13 L3 5 L10 2 L14 12 Z" fill="none" stroke="#2F5F8F" stroke-width="1"/><g fill="#fff" stroke="#2F5F8F" stroke-width="1"><rect x="0.5" y="11.5" width="3" height="3"/><rect x="1.5" y="3.5" width="3" height="3"/><rect x="8.5" y="0.5" width="3" height="3"/><rect x="12.5" y="10.5" width="3" height="3"/></g></svg>
<svg style="position:absolute;left:595px;top:927px" width="16" height="16" viewBox="0 0 16 16"><path d="M2 14 L4 10 L11 3 L13 5 L6 12 Z" fill="#F5B52E" stroke="#8A5A00" stroke-width="0.8"/><path d="M11 3 L13 1 L15 3 L13 5 Z" fill="#555"/><path d="M1 15 L3 12" stroke="#2F5F8F" stroke-width="1.2"/></svg>
<div style="position:absolute;left:618px;top:925px;width:1px;height:19px;background:#CFCDCA;"></div>
<svg style="position:absolute;left:627px;top:927px" width="16" height="16" viewBox="0 0 16 16"><rect x="1.5" y="4.5" width="13" height="10" fill="#FFF6E0" stroke="#A0620A" stroke-width="1.4"/><rect x="3.5" y="6.5" width="9" height="6" fill="#FFFFFF" stroke="#D89A3A" stroke-width="0.8"/><text x="8" y="12" text-anchor="middle" font-family="Liberation Sans" font-weight="bold" font-size="7" fill="#2F5F8F">A</text><path d="M6 4.5 L8 2 L10 4.5" fill="none" stroke="#777" stroke-width="0.8"/></svg>
<svg style="position:absolute;left:652px;top:927px" width="16" height="16" viewBox="0 0 16 16"><rect x="1" y="5" width="8" height="8" fill="#F07020" stroke="#A03000" stroke-width="0.8"/><circle cx="10.5" cy="5.5" r="4.5" fill="#FFD640" stroke="#C08000" stroke-width="0.8"/><path d="M10 8 L15 15 H5 Z" fill="#3E86E0" stroke="#1C4FA8" stroke-width="0.8"/></svg>
<svg style="position:absolute;left:677px;top:927px" width="16" height="16" viewBox="0 0 16 16"><rect x="1.5" y="4.5" width="13" height="10" fill="#FFF6E0" stroke="#A0620A" stroke-width="1.4"/><rect x="3.5" y="6.5" width="9" height="6" fill="#7FC2F0"/><path d="M3.5 12.5 L6 9.5 L8 11 L10 9 L12.5 12.5 Z" fill="#4CA040"/><path d="M6 4.5 L8 2 L10 4.5" fill="none" stroke="#777" stroke-width="0.8"/></svg>
<div style="position:absolute;left:700px;top:925px;width:1px;height:19px;background:#CFCDCA;"></div>
<svg style="position:absolute;left:709px;top:927px" width="16" height="16" viewBox="0 0 16 16"><path d="M3 9 Q2 3 8 2.5 Q14 3 13.5 8.5" fill="none" stroke="#3570B8" stroke-width="3"/><path d="M4 9 Q5 13 9 12 Q12 11 11 8" fill="none" stroke="#7FA9D8" stroke-width="2.5"/><path d="M9 8 L14 6 L13 11 Z" fill="#3570B8"/></svg>
<svg style="position:absolute;left:730px;top:927px" width="16" height="16" viewBox="0 0 16 16"><path d="M5 7 H11 L8 10 Z" fill="#000"/></svg>
<svg style="position:absolute;left:752px;top:927px" width="16" height="16" viewBox="0 0 16 16"><rect x="3.5" y="1.5" width="11" height="13" fill="#FFFFFF" stroke="#B0B0B0" stroke-width="1"/><path d="M2 1 V15" stroke="#3CA03C" stroke-width="1.5"/><rect x="3" y="6" width="4" height="4" fill="#3E86E0"/><path d="M14 8 H9 M11 5.5 L8.5 8 L11 10.5" fill="none" stroke="#E0502A" stroke-width="1.6"/></svg>
<svg style="position:absolute;left:773px;top:927px" width="16" height="16" viewBox="0 0 16 16"><path d="M5 7 H11 L8 10 Z" fill="#000"/></svg>
<svg style="position:absolute;left:794px;top:927px" width="16" height="16" viewBox="0 0 16 16"><rect x="1.5" y="6.5" width="8" height="8" rx="1" fill="#2E6FC8" stroke="#1C3F88" stroke-width="1"/><rect x="5.5" y="1.5" width="9" height="9" rx="1" fill="url(#gYellow)" stroke="#1C3F88" stroke-width="1.2"/></svg>
<svg style="position:absolute;left:815px;top:927px" width="16" height="16" viewBox="0 0 16 16"><path d="M5 7 H11 L8 10 Z" fill="#000"/></svg>
<div style="position:absolute;left:838px;top:925px;width:1px;height:19px;background:#CFCDCA;"></div>
<svg style="position:absolute;left:845px;top:927px" width="16" height="16" viewBox="0 0 16 16"><path d="M2 3 H7 V8 H12 V14 H6 V9 H2 Z" fill="#E4E4E4" stroke="#B8B8B8" stroke-width="1"/><path d="M9 2 L14 7" stroke="#C8C8C8" stroke-width="1.4"/></svg>
<div style="position:absolute;left:869px;top:922px;width:9px;height:25px;background:linear-gradient(#E4E3E1,#A9A7A4);"></div><svg style="position:absolute;left:869px;top:938px;" width="9" height="6" viewBox="0 0 9 6"><path d="M1.5 1 H7.5 L4.5 4 Z" fill="#000"/></svg>
<div style="position:absolute;left:450px;top:953px;width:1px;height:19px;background:#CFCDCA;"></div>
<div style="position:absolute;left:671px;top:953px;width:1px;height:19px;background:#CFCDCA;"></div>
<div style="position:absolute;left:687px;top:953px;width:1px;height:19px;background:#CFCDCA;"></div>
<div style="position:absolute;left:716px;top:953px;width:1px;height:19px;background:#CFCDCA;"></div>
<div style="position:absolute;left:785px;top:953px;width:1px;height:19px;background:#CFCDCA;"></div>
<div style="position:absolute;left:1096px;top:953px;width:1px;height:19px;background:#CFCDCA;"></div>
<div style="position:absolute;left:1239px;top:953px;width:1px;height:19px;background:#CFCDCA;"></div>
<svg style="position:absolute;left:458px;top:955px;" width="16" height="14" viewBox="0 0 16 14"><path d="M3 1 V12 M0.5 3.5 H6" stroke="#1A3A9A" stroke-width="1"/><rect x="5.5" y="5.5" width="9" height="6" fill="none" stroke="#333" stroke-width="1" stroke-dasharray="1.5 1"/></svg>
<div style="position:absolute;left:478px;top:956.60px;font-size:12.6px;line-height:14.49px;height:14.49px;white-space:nowrap;color:#222;font-weight:normal;">10.87 / 1.05</div>
<svg style="position:absolute;left:563px;top:955px;" width="16" height="14" viewBox="0 0 16 14"><rect x="4.5" y="2.5" width="10" height="9" fill="none" stroke="#333" stroke-width="1" stroke-dasharray="1.5 1"/><path d="M0.5 6.5 H3 M0.5 10 H3" stroke="#333" stroke-width="1"/><rect x="13" y="1" width="3" height="3" fill="#333"/></svg>
<div style="position:absolute;left:585px;top:956.60px;font-size:12.6px;line-height:14.49px;height:14.49px;white-space:nowrap;color:#222;font-weight:normal;">0.00 x 0.00</div>
<div style="position:absolute;left:722px;top:956.60px;font-size:12.6px;line-height:14.49px;height:14.49px;white-space:nowrap;color:#222;font-weight:normal;">Seite 1 / 1</div>
<div style="position:absolute;left:791px;top:956.60px;font-size:12.6px;line-height:14.49px;height:14.49px;white-space:nowrap;color:#222;font-weight:normal;">Standard</div>
<div style="position:absolute;left:1117px;top:962px;width:97px;height:1px;background:#6A6A6A;"></div>
<div style="position:absolute;left:1148px;top:958px;width:1px;height:10px;background:#6A6A6A;"></div>
<div style="position:absolute;left:1165px;top:958px;width:1px;height:10px;background:#6A6A6A;"></div>
<svg style="position:absolute;left:1099px;top:956.5px;" width="14" height="14" viewBox="0 0 14 14"><circle cx="7" cy="7" r="5.8" fill="url(#gBlue2)" stroke="#2F4F7F" stroke-width="1"/><path d="M4 7 H10" stroke="#1A2A4A" stroke-width="1.5"/></svg>
<svg style="position:absolute;left:1218px;top:956.5px;" width="14" height="14" viewBox="0 0 14 14"><circle cx="7" cy="7" r="5.8" fill="url(#gBlue2)" stroke="#2F4F7F" stroke-width="1"/><path d="M4 7 H10 M7 4 V10" stroke="#1A2A4A" stroke-width="1.5"/></svg>
<svg style="position:absolute;left:1145px;top:956.5px;" width="14" height="14" viewBox="0 0 14 14"><circle cx="7" cy="7" r="5.2" fill="#5F86B0" stroke="#2F4F6F" stroke-width="1"/><circle cx="6" cy="5.5" r="2" fill="#9AB8D8"/></svg>
<div style="position:absolute;left:1241px;top:956.60px;font-size:12.6px;line-height:14.49px;height:14.49px;white-space:nowrap;color:#222;font-weight:normal;">76 %</div>
</body></html>
